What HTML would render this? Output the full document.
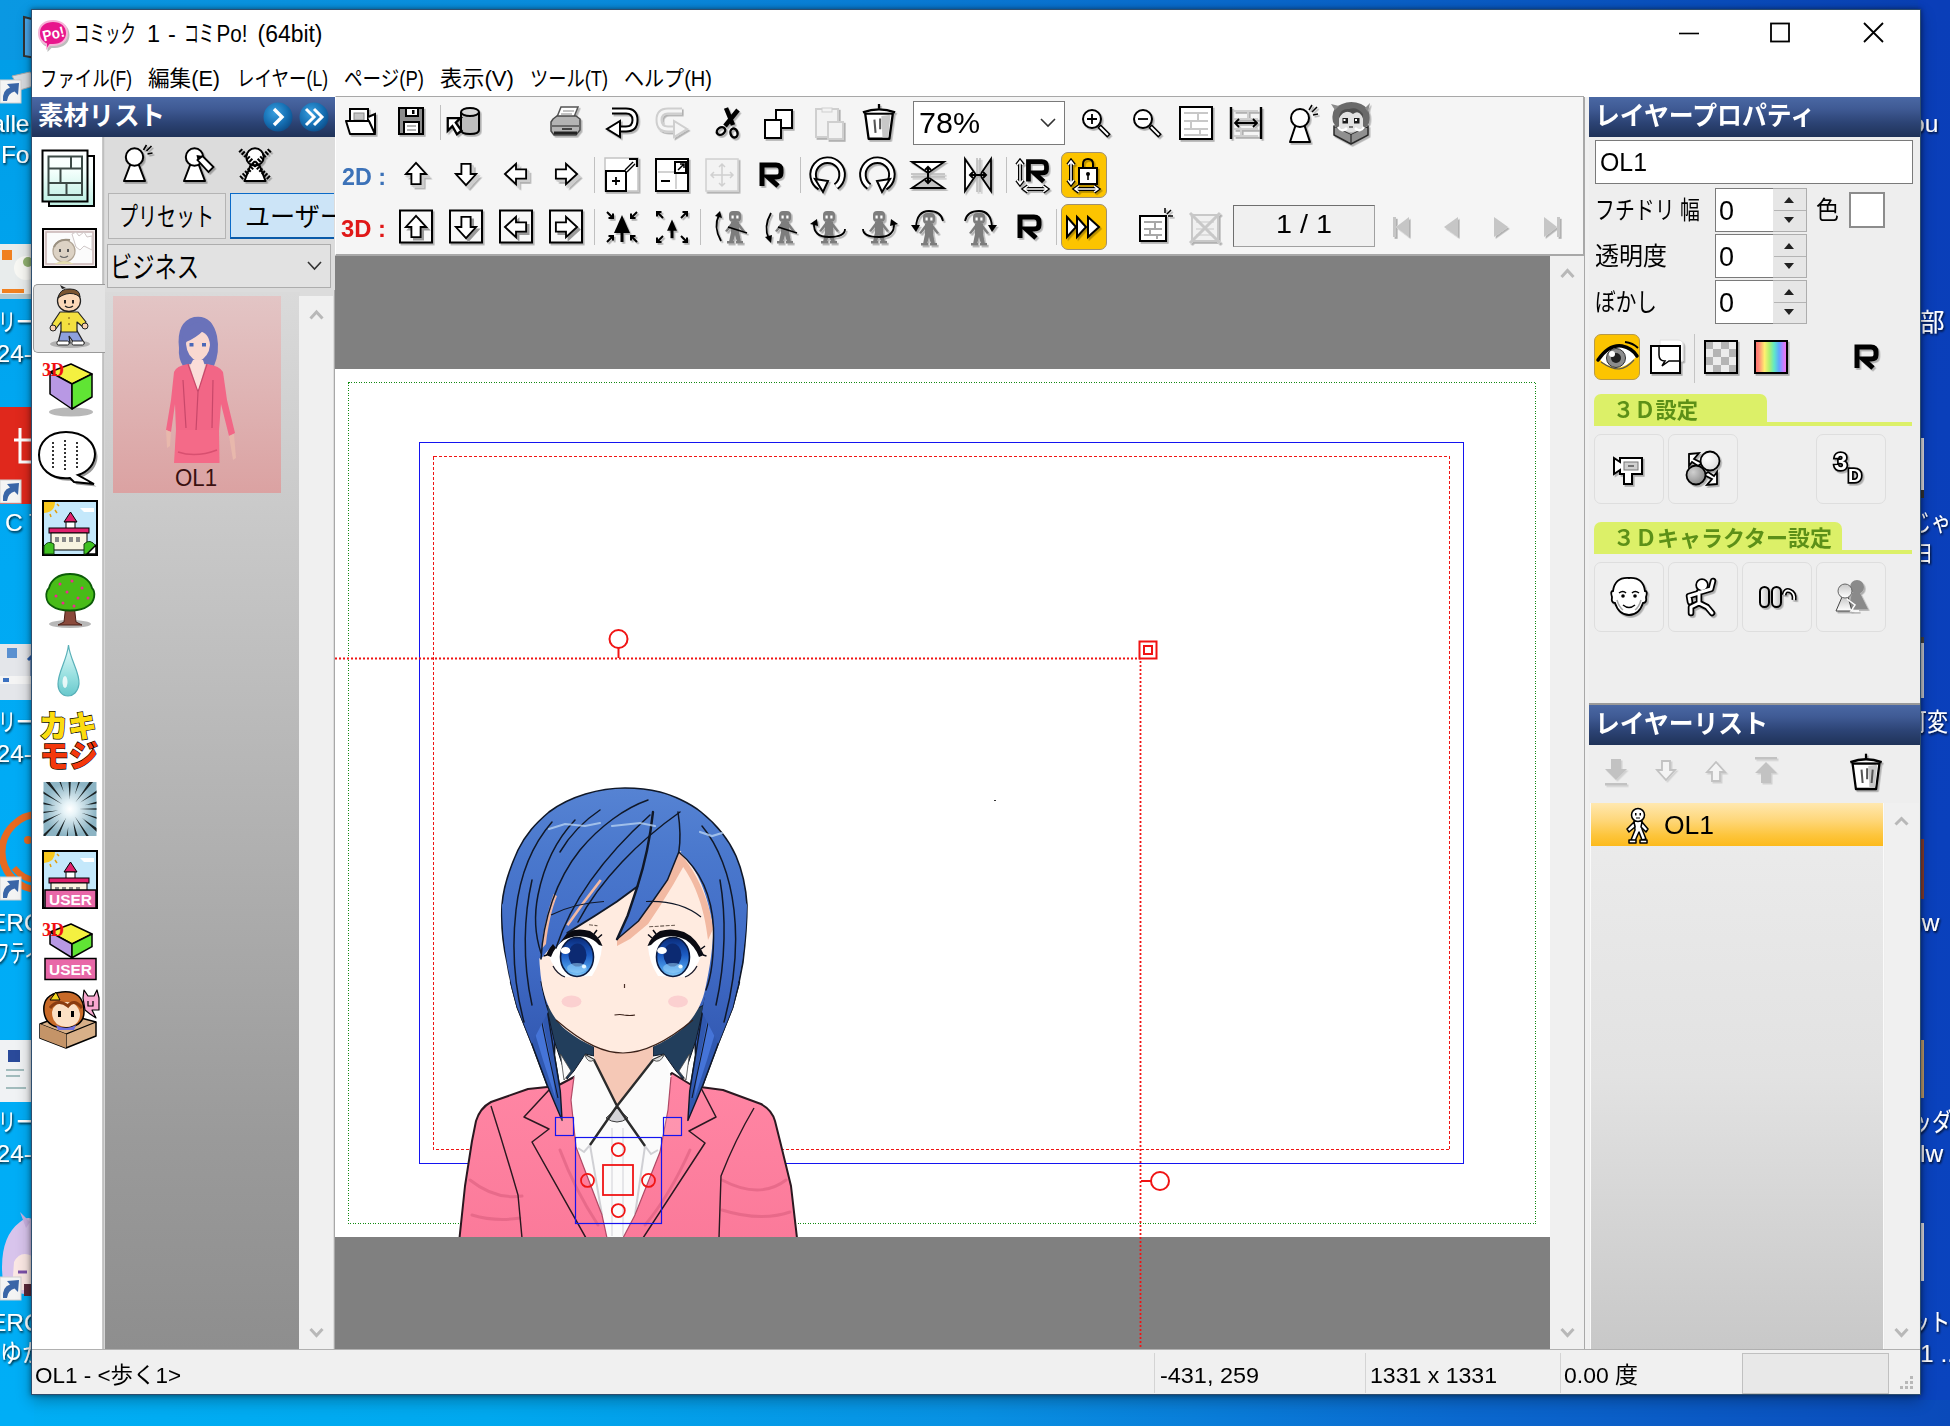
<!DOCTYPE html>
<html lang="ja">
<head>
<meta charset="utf-8">
<title>コミック 1 - コミPo! (64bit)</title>
<style>
html,body{margin:0;padding:0}
body{width:1950px;height:1426px;position:relative;overflow:hidden;background:#0a78d2;
 font-family:"Liberation Sans","Noto Sans CJK JP",sans-serif;color:#000}
div{position:absolute;box-sizing:border-box}
svg.ov{position:absolute;left:0;top:0;width:1950px;height:1426px;overflow:hidden;pointer-events:none}
svg text{font-family:"Liberation Sans","Noto Sans CJK JP",sans-serif}
.hdr{background:linear-gradient(#4a68a4 0%,#3f5a94 30%,#2c4374 65%,#1f3258 100%)}
</style>
</head>
<body>

<!-- 10_desktop.html -->
<div id="desktop" style="left:0;top:0;width:1950px;height:1426px;background:
 linear-gradient(to right,#0a98e2 0%,#0a8cdc 30%,#0a72d0 55%,#0a56c0 80%,#0a3eb2 100%)"></div>
<div style="left:0;top:700px;width:1950px;height:726px;background:
 linear-gradient(to right,#00aef4 0%,#00a8ee 25%,#0890e2 50%,#0a68ce 75%,#0a4aba 100%)"></div>
<div style="left:0;top:60px;width:34px;height:1366px;background:linear-gradient(#009ee8,#00a8f2 30%,#00acf6 60%,#00aef6)"></div>
<div style="left:1918px;top:0;width:32px;height:1400px;background:linear-gradient(#0a3eb8,#0a40bc 60%,#0a44be)"></div>

<!-- 15_desktop_icons.html -->
<svg class="ov" id="deskicons">
 <defs>
  <filter id="tsh" x="-20%" y="-20%" width="150%" height="150%"><feDropShadow dx="1" dy="1.500" stdDeviation="1.200" flood-color="#000" flood-opacity=".85"/></filter>
   </defs>
 <!-- left column -->
 <path d="M24 17L36 20V58L24 56Z" fill="#4aa8ec" stroke="#333" stroke-width="2"/>
 <path d="M12 76L30 72L40 84L20 90Z" fill="#d8dce0" stroke="#aaa"/>
 <g transform="translate(0 80)"><rect x="0" y="0" width="21" height="23" fill="#f4f4f4" stroke="#d0d0d0" stroke-width="1"/><path d="M3 21Q2 10 10 7.500L7 4L19 3L18 15L14.500 11.500Q8 13 7 21Z" fill="#3a66a8"/></g>
 <rect x="0" y="244" width="33" height="55" fill="#e8ecec"/><rect x="2" y="250" width="10" height="10" fill="#f08020"/><circle cx="26" cy="268" r="12" fill="#f8f8f4"/><circle cx="28" cy="262" r="5" fill="#90b070"/><rect x="2" y="289" width="22" height="4" fill="#f08020"/><rect x="0" y="294" width="33" height="5" fill="#b0c8d0"/>
 <rect x="0" y="407" width="33" height="97" fill="#e0281c"/>
 <path d="M14 440H32M20 428V462H32" fill="none" stroke="#fff" stroke-width="3"/>
 <g transform="translate(0 480)"><rect x="0" y="0" width="21" height="23" fill="#f4f4f4" stroke="#d0d0d0" stroke-width="1"/><path d="M3 21Q2 10 10 7.500L7 4L19 3L18 15L14.500 11.500Q8 13 7 21Z" fill="#3a66a8"/></g>
 <rect x="0" y="644" width="33" height="56" fill="#e4e6ea"/><rect x="7" y="648" width="10" height="10" fill="#5a90d0"/><rect x="0" y="676" width="33" height="8" fill="#f4f4f4"/><rect x="3" y="678" width="6" height="4" fill="#3a70c0"/><path d="M28 660L32 656V676" stroke="#2a60b0" stroke-width="3" fill="none"/>
 <circle cx="40" cy="852" r="38" fill="none" stroke="#e86a20" stroke-width="7"/><path d="M14 868Q24 880 36 880" fill="none" stroke="#e86a20" stroke-width="6"/><circle cx="28" cy="840" r="4" fill="#e86a20"/>
 <g transform="translate(0 877)"><rect x="0" y="0" width="21" height="23" fill="#f4f4f4" stroke="#d0d0d0" stroke-width="1"/><path d="M3 21Q2 10 10 7.500L7 4L19 3L18 15L14.500 11.500Q8 13 7 21Z" fill="#3a66a8"/></g>
 <rect x="0" y="1040" width="33" height="62" fill="#f0f2f4"/><rect x="8" y="1050" width="12" height="12" fill="#2a4a9a"/><path d="M6 1070H24M6 1076H20M6 1088H26" stroke="#8aa" stroke-width="1.500"/>
 <path d="M4 1290Q-4 1240 20 1222Q30 1214 34 1222V1296Z" fill="#d8c4ec"/><path d="M20 1212L30 1222L26 1228Z" fill="#c8b0e0"/><path d="M14 1262Q20 1250 32 1256V1290H12Z" fill="#fbe8e4"/><path d="M18 1272H27" stroke="#7a50a8" stroke-width="3"/><rect x="24" y="1284" width="10" height="12" fill="#5a2a3a"/>
 <g transform="translate(0 1277)"><rect x="0" y="0" width="21" height="23" fill="#f4f4f4" stroke="#d0d0d0" stroke-width="1"/><path d="M3 21Q2 10 10 7.500L7 4L19 3L18 15L14.500 11.500Q8 13 7 21Z" fill="#3a66a8"/></g>
 <!-- right column icon scraps -->
 <rect x="1920" y="438" width="4" height="52" fill="#e4e4e8"/><rect x="1920" y="490" width="4" height="8" fill="#333"/>
 <rect x="1920" y="637" width="4" height="6" fill="#444"/><rect x="1920" y="643" width="4" height="55" fill="#c8ccd4"/>
 <rect x="1920" y="839" width="4" height="60" fill="#8a4030"/><rect x="1920" y="1040" width="4" height="58" fill="#c0a070"/>
 <rect x="1920" y="1223" width="4" height="58" fill="#e4e4e8"/>
 <g fill="#fff" font-size="24.500" filter="url(#tsh)">
  <g text-anchor="end">
   <text x="29.500" y="132">alle</text><text x="29.500" y="163">Fo</text>
   <text x="34" y="331" textLength="36" lengthAdjust="spacingAndGlyphs">リー</text><text x="32" y="362">24-</text>
   <text x="44" y="531">C T</text>
   <text x="34" y="731" textLength="36" lengthAdjust="spacingAndGlyphs">リー</text><text x="32" y="762">24-</text>
   <text x="43" y="931">ERO</text><text x="40" y="962" textLength="46" lengthAdjust="spacingAndGlyphs">フティ</text>
   <text x="34" y="1131" textLength="36" lengthAdjust="spacingAndGlyphs">リー</text><text x="32" y="1162">24-</text>
   <text x="43" y="1331">ERO</text><text x="44" y="1362" textLength="44" lengthAdjust="spacingAndGlyphs">ゆか</text>
  </g>
  <text x="1911" y="132">ou</text>
  <text x="1920" y="331">部</text>
  <text x="1911" y="531" textLength="40" lengthAdjust="spacingAndGlyphs">じゃ</text><text x="1915" y="562" textLength="18" lengthAdjust="spacingAndGlyphs">ヨ</text>
  <text x="1906" y="731" textLength="42" lengthAdjust="spacingAndGlyphs">可変</text>
  <text x="1908" y="931">3w</text>
  <text x="1912" y="1131" textLength="40" lengthAdjust="spacingAndGlyphs">ッダ</text><text x="1920" y="1162">lw</text>
  <text x="1910" y="1331" textLength="40" lengthAdjust="spacingAndGlyphs">ット</text><text x="1920" y="1362">1 ...</text>
 </g>
</svg>

<!-- 20_window.html -->
<div id="win" style="left:31px;top:9px;width:1890px;height:1386px;background:#f0f0f0;border:1px solid #2d4d6e;box-shadow:0 0 5px rgba(0,0,0,.45),0 6px 14px rgba(0,0,0,.28)"></div>
<div id="titlebar" style="left:32px;top:10px;width:1888px;height:48px;background:#fff"></div>
<div id="menubar" style="left:32px;top:58px;width:1888px;height:39px;background:#fff"></div>
<svg class="ov">
 <!-- app icon -->
 <g>
  <path d="M38 33 C38 24 45 20 53 20 C62 20 68 25 68 33 C68 41 62 46 53 46 L50 46 L46 50 L46 45 C41 43 38 39 38 33Z" fill="#bdbdbd" transform="translate(1.5 2)"/>
  <path d="M38 33 C38 24 45 20 53 20 C62 20 68 25 68 33 C68 41 62 46 53 46 L50 46 L46 50 L46 45 C41 43 38 39 38 33Z" fill="#f6b4d8"/>
  <path d="M40 33 C40 25.500 46 22 53 22 C61 22 66 26.500 66 33 C66 39.500 61 44 53 44 L49.500 44 L47 47.500 L47 43.500 C42.500 41.500 40 38 40 33Z" fill="#e8168c"/>
  <text x="42.500" y="39" font-size="15" font-weight="700" fill="#fff" textLength="22" lengthAdjust="spacingAndGlyphs" transform="rotate(-14 53 34)">Po!</text>
 </g>
 <g font-size="23.5"><text x="74" y="41.5" textLength="62" lengthAdjust="spacingAndGlyphs">コミック</text><text x="147" y="41.5">1</text><text x="168" y="41.5">-</text><text x="184" y="41.5" textLength="30" lengthAdjust="spacingAndGlyphs">コミ</text><text x="216.5" y="41.5" textLength="31" lengthAdjust="spacingAndGlyphs">Po!</text><text x="257.5" y="41.5" textLength="65" lengthAdjust="spacingAndGlyphs">(64bit)</text></g>
 <!-- window buttons -->
 <path d="M1679 33.5H1699" stroke="#000" stroke-width="1.6"/>
 <rect x="1771" y="23.5" width="18" height="18" fill="none" stroke="#000" stroke-width="1.8"/>
 <path d="M1864 23L1883 42M1883 23L1864 42" stroke="#000" stroke-width="1.8"/>
 <!-- menu -->
 <g font-size="21.5">
 <text x="40" y="86" textLength="92" lengthAdjust="spacingAndGlyphs">ファイル(F)</text>
 <text x="148" y="86" textLength="72" lengthAdjust="spacingAndGlyphs">編集(E)</text>
 <text x="237" y="86" textLength="91" lengthAdjust="spacingAndGlyphs">レイヤー(L)</text>
 <text x="344" y="86" textLength="80" lengthAdjust="spacingAndGlyphs">ページ(P)</text>
 <text x="440" y="86" textLength="74" lengthAdjust="spacingAndGlyphs">表示(V)</text>
 <text x="530" y="86" textLength="78" lengthAdjust="spacingAndGlyphs">ツール(T)</text>
 <text x="624" y="86" textLength="88" lengthAdjust="spacingAndGlyphs">ヘルプ(H)</text>
 </g>
</svg>

<!-- 30_left.html -->
<div id="leftpanel" style="left:32px;top:97px;width:303px;height:1253px;background:#dcdcdc"></div>
<div class="hdr" style="left:32px;top:97px;width:303px;height:40px"></div>
<div id="iconcol" style="left:32px;top:137px;width:71px;height:1213px;background:#fff;border-right:1px solid #c8c8c8"></div>
<div style="left:103px;top:137px;width:2px;height:1213px;background:linear-gradient(to right,#b4b4b4,#e0e0e0)"></div>
<div style="left:334px;top:290px;width:1px;height:1060px;background:#a8a8a8"></div>
<div id="seltab" style="left:33px;top:284px;width:72px;height:69px;background:#e4e4e4;border:1px solid #9a9a9a;border-right:none;border-radius:5px 0 0 5px"></div>
<div id="tab1" style="left:108px;top:193px;width:118px;height:46px;background:#e1e1e1;border:1px solid #b4b4b4"></div>
<div id="tab2" style="left:230px;top:193px;width:104px;height:46px;background:#cce4f7;border:1px solid #0a6ac8;border-bottom:2px solid #0a5aa8;border-right:none"></div>
<div id="combo" style="left:107px;top:244px;width:224px;height:44px;background:#e2e2e2;border:1px solid #adadad"></div>
<div id="matlist" style="left:105px;top:292px;width:195px;height:1058px;background:linear-gradient(#dadada 0%,#c6c6c6 25%,#aeaeae 55%,#9a9a9a 80%,#8e8e8e 100%)"></div>
<div id="lscroll" style="left:299px;top:296px;width:34px;height:1054px;background:#f0f0f0"></div>
<div id="thumb" style="left:113px;top:296px;width:168px;height:197px;background:linear-gradient(#e3c5c5,#dba2a2)"></div>
<svg class="ov">
 <defs>
  <radialGradient id="bluebtn" cx="0.4" cy="0.35" r="0.7"><stop offset="0" stop-color="#3aa0e0"/><stop offset="0.6" stop-color="#1670b4"/><stop offset="1" stop-color="#0c4c88"/></radialGradient>
 </defs>
 <text x="38" y="125" font-size="26" font-weight="700" fill="#fff" textLength="127" lengthAdjust="spacingAndGlyphs">素材リスト</text>
 <circle cx="278" cy="117" r="14.5" fill="url(#bluebtn)"/>
 <circle cx="314" cy="117" r="14.5" fill="url(#bluebtn)"/>
 <path d="M274 109L282 117L274 125" fill="none" stroke="#fff" stroke-width="3.4"/>
 <path d="M306 109L314 117L306 125M314 109L322 117L314 125" fill="none" stroke="#fff" stroke-width="3"/>
 <text x="119" y="226" font-size="26" textLength="95" lengthAdjust="spacingAndGlyphs">プリセット</text>
 <text x="245" y="226" font-size="26" textLength="100" lengthAdjust="spacingAndGlyphs">ユーザー</text>
 <text x="110" y="278" font-size="29" textLength="89" lengthAdjust="spacingAndGlyphs">ビジネス</text>
 <path d="M308 262L314.5 269L321 262" fill="none" stroke="#333" stroke-width="1.6"/>
 <path d="M310.500 318.500L316.500 312L322.500 318.500" fill="none" stroke="#b8b8b8" stroke-width="3"/>
 <path d="M310.500 1329L316.500 1335.500L322.500 1329" fill="none" stroke="#b8b8b8" stroke-width="3"/>
 <text x="175" y="486" font-size="23" fill="#3a1010" textLength="42" lengthAdjust="spacingAndGlyphs">OL1</text>
</svg>

<!-- 35_left_icons.html -->
<svg class="ov" id="lefticons">
<defs><filter id="lsh" x="-30%" y="-30%" width="170%" height="170%"><feDropShadow dx="1.6" dy="1.800" stdDeviation="0.7" flood-color="#000" flood-opacity=".28"/></filter><linearGradient id="mint" x1="0" y1="0" x2="0" y2="1"><stop offset="0" stop-color="#fff"/><stop offset=".4" stop-color="#f4fffc"/><stop offset="1" stop-color="#bff0e4"/></linearGradient><linearGradient id="dropg" x1="0" y1="0" x2="0" y2="1"><stop offset="0" stop-color="#e8fcfc"/><stop offset=".6" stop-color="#98e0e0"/><stop offset="1" stop-color="#68c8cc"/></linearGradient><radialGradient id="burstg"><stop offset="0" stop-color="#fff"/><stop offset=".25" stop-color="#e8f4f8"/><stop offset="1" stop-color="#8cb4c4"/></radialGradient><clipPath id="burstclip"><rect x="43.500" y="782" width="53" height="54"/></clipPath></defs>
<g transform="translate(134.5 165)" filter="url(#lsh)"><path d="M-4 -1L-10.500 16H10.500L4 -1" fill="#fff" stroke="#000" stroke-width="2" stroke-linejoin="round"/><circle cx="0" cy="-8" r="8.700" fill="#fff" stroke="#000" stroke-width="2"/><path d="M9 -15L12 -20M13 -11L18 -12M12 -14L17 -19" stroke="#000" stroke-width="1.600"/></g>
<g transform="translate(194.5 165)" filter="url(#lsh)"><path d="M-4 -1L-10.500 16H10.500L4 -1" fill="#fff" stroke="#000" stroke-width="2" stroke-linejoin="round"/><circle cx="0" cy="-8" r="8.700" fill="#fff" stroke="#000" stroke-width="2"/><path d="M3 -5L8 -9L19 2L14 7Z" fill="#fff" stroke="#000" stroke-width="1.800"/><path d="M3 -5L2 -10L8 -9" fill="#000"/></g>
<g transform="translate(255 165)" filter="url(#lsh)"><path d="M-4 -1L-10.500 16H10.500L4 -1" fill="#fff" stroke="#000" stroke-width="2" stroke-linejoin="round"/><circle cx="0" cy="-8" r="8.700" fill="#fff" stroke="#000" stroke-width="2"/><path d="M-15 -15L15 14M15 -15L-15 14" stroke="#000" stroke-width="4.500" stroke-dasharray="2 1.500"/></g>
<g><rect x="49" y="156" width="45" height="50" fill="url(#mint)" stroke="#000" stroke-width="2"/><rect x="42.500" y="150.500" width="45" height="51" fill="url(#mint)" stroke="#000" stroke-width="2"/><path d="M48.500 156.500H82V195H48.500ZM48.500 168.500H82M48.500 183H82M71 156.500V168.500M60.500 168.500V183M66.500 183V195" fill="none" stroke="#3c4a46" stroke-width="2"/></g>
<g><rect x="43" y="229" width="53" height="38" fill="#f4ecec" stroke="#000" stroke-width="2"/><rect x="46" y="232" width="47" height="32" fill="#fbfbfb" stroke="#c8b4b4" stroke-width="1.500"/><path d="M72 234L76 232L79 236L84 232L87 237L92 236V250L84 246L80 250L76 247Z" fill="#fff" stroke="#d0c8c8" stroke-width="1"/><circle cx="64" cy="251" r="11" fill="#dcd2c4" stroke="#b0a494" stroke-width="1.200"/><path d="M54 247Q58 238 70 240" fill="none" stroke="#9a9080" stroke-width="2"/><rect x="59" y="249" width="2" height="3" fill="#555"/><rect x="67" y="249" width="2" height="3" fill="#555"/><path d="M60 256Q64 259 68 256" fill="none" stroke="#666" stroke-width="1.200"/><path d="M54 264Q64 258 74 264Z" fill="#e4dcb0"/></g>
<g><ellipse cx="70" cy="344" rx="20" ry="4" fill="#9a9a9a" opacity=".7"/><path d="M61 331L58 343H70L69 336L74 343H84L76 329Z" fill="#8ea0dc" stroke="#222" stroke-width="1.200"/><rect x="57" y="341" width="12" height="4" rx="1.500" fill="#fff" stroke="#222"/><rect x="72" y="341" width="12" height="4" rx="1.500" fill="#fff" stroke="#222"/><path d="M60 312L52 324L55 330L61 322V332H77V322L83 327L86 322L78 312Z" fill="#f4e040" stroke="#222" stroke-width="1.200" stroke-linejoin="round"/><circle cx="53" cy="328" r="3" fill="#f8d0b0" stroke="#222"/><circle cx="85" cy="326" r="3" fill="#f8d0b0" stroke="#222"/><ellipse cx="69" cy="301" rx="11.500" ry="10.500" fill="#fbd8b8" stroke="#222" stroke-width="1.300"/><path d="M58 298Q60 288 70 289Q80 289 80 297Q74 292 66 294Q62 295 58 298Z" fill="#7a5430" stroke="#222" stroke-width="1"/><path d="M62 289L60 285L66 288" fill="#222"/><rect x="64" y="300" width="2" height="3.500" fill="#222"/><rect x="72" y="300" width="2" height="3.500" fill="#222"/><path d="M65 306Q69 309 73 306" fill="none" stroke="#222" stroke-width="1.200"/><circle cx="69" cy="318" r="1" fill="#a08020"/><circle cx="69" cy="324" r="1" fill="#a08020"/></g>
<ellipse cx="71" cy="412" rx="22" ry="4.500" fill="#9a9a9a" opacity=".7"/><g transform="translate(50 364)"><path d="M0 8L21 0L42 10L22 20Z" fill="#f4f040" stroke="#000" stroke-width="1.500" stroke-linejoin="round"/><path d="M0 8L22 20V45.0L0 30.0Z" fill="#b898e4" stroke="#000" stroke-width="1.500" stroke-linejoin="round"/><path d="M42 10L22 20V45.0L42 33.0Z" fill="#60e434" stroke="#000" stroke-width="1.500" stroke-linejoin="round"/></g><text x="42" y="376" font-size="19" font-weight="700" fill="#f01010" textLength="22" lengthAdjust="spacingAndGlyphs" style="font-family:'Liberation Serif',serif">3D</text>
<g><path d="M66 432C84 432 95 443 95 454C95 464 88 472 78 475L94 484L74 482L70 478C50 480 39 468 39 455C39 443 48 432 66 432Z" fill="#999" transform="translate(2.500 2.500)"/><path d="M66 432C84 432 95 443 95 454C95 464 88 472 78 475L94 484L74 482L70 478C50 480 39 468 39 455C39 443 48 432 66 432Z" fill="#fff" stroke="#000" stroke-width="2"/><path d="M53 442V468M65 440V470M77 442V468" stroke="#333" stroke-width="2" stroke-dasharray="2 2"/></g>
<g transform="translate(0 500)"><rect x="43" y="1" width="54" height="54" fill="#c4e8fb" stroke="#000" stroke-width="2"/><path d="M44 2H55Q55 12 44 13Z" fill="#f8c820"/><path d="M57 4L59 6M55 10L57 13M50 14L51 17" stroke="#e0a010" stroke-width="1.500"/><path d="M80 8H94V12H84Z" fill="#fff"/><path d="M64 22L70.500 12L77 22Z" fill="#e0206c" stroke="#000" stroke-width="1"/><rect x="66" y="22" width="9" height="7" fill="#fff" stroke="#000" stroke-width="1"/><rect x="49" y="28" width="40" height="5" fill="#e0206c" stroke="#000" stroke-width="1"/><rect x="51" y="33" width="36" height="17" fill="#f8f4e0" stroke="#000" stroke-width="1"/><path d="M55 37h4v5h-4zM62 37h4v5h-4zM69 37h4v5h-4zM76 37h4v5h-4z" fill="#888"/><path d="M44 46Q48 40 54 44V54H44ZM96 46Q90 38 84 44V54H96Z" fill="#40c020" stroke="#104010" stroke-width="1"/><path d="M87 54L96 45V54Z" fill="#fff" stroke="#000" stroke-width="1.500"/></g>
<g><ellipse cx="70" cy="624" rx="21" ry="4" fill="#9a9a9a" opacity=".7"/><path d="M66 604H74L76 622L82 625H58L64 622Z" fill="#8a4a3c" stroke="#4a2018" stroke-width="1"/><path d="M70 574C82 574 90 580 92 588C96 592 95 602 88 606C80 612 60 612 52 606C45 602 45 592 49 588C51 580 58 574 70 574Z" fill="#48bc18" stroke="#0c5c08" stroke-width="1.800"/><g fill="#f02890"><circle cx="60" cy="584" r="1.500"/><circle cx="72" cy="581" r="1.500"/><circle cx="82" cy="588" r="1.500"/><circle cx="56" cy="596" r="1.500"/><circle cx="67" cy="592" r="1.500"/><circle cx="78" cy="598" r="1.500"/><circle cx="88" cy="598" r="1.500"/><circle cx="63" cy="603" r="1.500"/><circle cx="74" cy="606" r="1.500"/></g></g>
<path d="M68.500 645C70 660 80 672 79 684C78 692 73 696 68 696C62 696 58 691 58 684C58 672 67 660 68.500 645Z" fill="url(#dropg)" stroke="#58b0b8" stroke-width="1.200"/><ellipse cx="65" cy="682" rx="2.500" ry="6" fill="#fff" opacity=".8"/>
<g font-weight="900" stroke="#000" stroke-width="1.300" paint-order="stroke" style="font-family:'Noto Sans CJK JP',sans-serif"><text x="39" y="737" font-size="31" fill="#fcdc10" textLength="58" lengthAdjust="spacingAndGlyphs">カキ</text><text x="40" y="767" font-size="31" fill="#f4380c" textLength="58" lengthAdjust="spacingAndGlyphs">モジ</text></g>
<g><rect x="43.500" y="782" width="53" height="54" fill="url(#burstg)"/><g clip-path="url(#burstclip)"><path d="M79.0 809.0L110.0 807.6L110.0 810.4ZM81.4 812.8L108.3 820.4L107.4 823.1ZM82.0 818.1L102.7 832.0L101.0 834.3ZM84.1 820.2L102.1 832.8L100.4 835.0ZM74.9 816.6L92.9 841.8L90.5 843.3ZM73.0 820.6L81.2 847.4L78.5 848.1ZM73.3 823.6L80.3 847.7L77.5 848.3ZM68.2 826.9L67.4 848.9L64.6 848.6ZM66.3 817.2L54.8 846.0L52.3 844.9ZM64.8 819.8L53.9 845.6L51.4 844.4ZM59.5 819.7L43.1 838.6L41.1 836.6ZM54.0 817.2L35.1 828.5L33.8 826.0ZM61.9 812.9L34.6 827.6L33.4 825.1ZM58.1 810.5L30.5 815.3L30.2 812.6ZM55.3 806.0L30.5 802.4L31.1 799.7ZM52.5 805.0L30.7 801.5L31.3 798.7ZM62.3 804.3L35.2 789.3L36.6 787.0ZM62.3 799.8L43.2 779.3L45.4 777.5ZM60.6 797.3L44.0 778.6L46.2 776.9ZM63.8 792.1L55.0 771.9L57.7 771.0ZM69.8 800.0L67.6 769.1L70.4 769.0ZM70.0 797.0L68.6 769.0L71.4 769.0ZM74.8 794.8L81.4 770.7L84.1 771.6ZM80.9 794.7L93.0 776.3L95.3 778.0ZM75.6 802.0L93.8 776.9L96.0 778.6ZM80.1 802.5L102.8 786.1L104.3 788.5ZM84.5 805.3L108.4 797.8L109.1 800.5ZM87.5 805.0L108.7 798.7L109.3 801.5Z" fill="#1a2224"/></g></g>
<g transform="translate(0 850)"><rect x="43" y="1" width="54" height="57" fill="#c4e8fb" stroke="#000" stroke-width="2"/><path d="M44 2H55Q55 12 44 13Z" fill="#f8c820"/><path d="M57 4L59 6M55 10L57 13M50 14L51 17" stroke="#e0a010" stroke-width="1.500"/><path d="M80 8H94V12H84Z" fill="#fff"/><path d="M64 22L70.500 12L77 22Z" fill="#e0206c" stroke="#000" stroke-width="1"/><rect x="66" y="22" width="9" height="7" fill="#fff" stroke="#000" stroke-width="1"/><rect x="49" y="28" width="40" height="5" fill="#e0206c" stroke="#000" stroke-width="1"/><rect x="51" y="33" width="36" height="17" fill="#f8f4e0" stroke="#000" stroke-width="1"/><path d="M55 37h4v5h-4zM62 37h4v5h-4zM69 37h4v5h-4zM76 37h4v5h-4z" fill="#888"/><rect x="45" y="40" width="51" height="18" fill="#e868a8" stroke="#000" stroke-width="1.500"/><text x="49" y="54.500" font-size="14" font-weight="700" fill="#fff" textLength="43" lengthAdjust="spacingAndGlyphs">USER</text></g>
<g transform="translate(50 924)"><path d="M0 8L21 0L42 10L22 20Z" fill="#f4f040" stroke="#000" stroke-width="1.500" stroke-linejoin="round"/><path d="M0 8L22 20V33.75L0 20.1Z" fill="#b898e4" stroke="#000" stroke-width="1.500" stroke-linejoin="round"/><path d="M42 10L22 20V33.75L42 22.65Z" fill="#60e434" stroke="#000" stroke-width="1.500" stroke-linejoin="round"/></g><text x="42" y="936" font-size="19" font-weight="700" fill="#f01010" textLength="22" lengthAdjust="spacingAndGlyphs" style="font-family:'Liberation Serif',serif">3D</text><rect x="45" y="958.500" width="51" height="21" fill="#e868a8" stroke="#000" stroke-width="1.500"/><text x="49" y="975" font-size="14" font-weight="700" fill="#fff" textLength="43" lengthAdjust="spacingAndGlyphs">USER</text>
<g><path d="M40 1024L66 1014L96 1022V1036L66 1048L40 1038Z" fill="#d8b088" stroke="#000" stroke-width="1.500" stroke-linejoin="round"/><path d="M40 1024L66 1034L96 1022M66 1034V1048" fill="none" stroke="#000" stroke-width="1.200"/><path d="M40 1024L66 1034V1048L40 1038Z" fill="#c49468"/><path d="M44 1012Q42 994 62 992Q84 990 84 1012Q84 1026 66 1028Q46 1028 44 1012Z" fill="#c86a28" stroke="#000" stroke-width="1.500"/><path d="M52 1012Q54 1002 66 1002Q78 1002 80 1014Q80 1026 66 1027Q52 1026 52 1012Z" fill="#fce0c4"/><path d="M50 1000L56 992L60 1000Z" fill="#f4d820" stroke="#000" stroke-width="1"/><path d="M50 1008Q58 998 68 1006Q74 998 82 1008" fill="none" stroke="#8a3c10" stroke-width="3"/><rect x="58" y="1011" width="3" height="6" fill="#000"/><rect x="71" y="1011" width="3" height="6" fill="#000"/><path d="M56 1025Q66 1031 76 1025L74 1030H58Z" fill="#7070e0"/><path d="M83 998L84 990L88 996L94 996L97 990L99 998V1010H92L96 1018L90 1014L85 1010Z" fill="#f8a8d0" stroke="#000" stroke-width="1.200" stroke-linejoin="round"/><path d="M88 1001V1006H93V1001" fill="none" stroke="#000" stroke-width="1.200"/></g>
<g id="thumbchar"><path d="M179 348Q176 322 194 317Q212 314 217 336Q220 352 214 366L206 364L190 364L183 366Q178 358 179 348Z" fill="#6a72ba"/><path d="M186 344Q187 332 198 331Q209 332 210 345Q209 357 198 362Q187 357 186 344Z" fill="#f9d8d0"/><path d="M181 350Q181 326 198 322Q214 326 214 348Q210 336 204 330Q196 338 186 342Q184 346 181 350Z" fill="#6a72ba"/><rect x="189.500" y="343" width="4" height="3.500" fill="#4a68b8"/><rect x="202" y="343" width="4" height="3.500" fill="#4a68b8"/><path d="M193 360H203L205 366L198 392L190 366Z" fill="#fbdcd8"/><path d="M174 372Q176 366 188 364L198 392L207 364Q220 366 223 372L227 400L235 433L229 436L221 404L219 431H176L175 404L171 432L166 430L171 400Z" fill="#f26686"/><path d="M188 364L198 392L207 364M198 392L196 431M183 380L186 428M213 380L212 428" fill="none" stroke="#c8486a" stroke-width="1.200"/><path d="M176 430H219L219.500 463H174Z" fill="#f46a88"/><path d="M178 452Q196 458 217 450" fill="none" stroke="#d85070" stroke-width="1.500"/><path d="M166 430L171 432L170 446L167 448ZM229 436L234 434L236 458L233 460Z" fill="#e8b8ac"/></g>
</svg>

<!-- 40_toolbar.html -->
<div id="toolbar" style="left:335px;top:96px;width:1249px;height:160px;background:#f5f5f5;border-top:1px solid #a8a8a8;border-left:1px solid #fff;border-right:1px solid #a8a8a8;border-bottom:2px solid #a8a8a8"></div>
<div id="zoomcombo" style="left:913px;top:101px;width:152px;height:44px;background:#fff;border:1px solid #7a7a7a"></div>
<div id="pagebox" style="left:1233px;top:205px;width:142px;height:42px;background:#f0f0f0;border:1px solid #a0a0a0;border-top-color:#6e6e6e;border-left-color:#6e6e6e"></div>
<div id="hl1" style="left:1061px;top:152px;width:46px;height:46px;background:#fcc400;border:1px solid #a09070;border-radius:7px"></div>
<div id="hl2" style="left:1061px;top:204px;width:46px;height:46px;background:#fcc400;border:1px solid #a09070;border-radius:7px"></div>

<!-- 45_toolbar_icons.html -->
<svg class="ov" id="tbicons">
<defs><filter id="ish" x="-30%" y="-30%" width="170%" height="170%"><feDropShadow dx="1.6" dy="1.800" stdDeviation="0.7" flood-color="#000" flood-opacity=".28"/></filter></defs>
<g filter="url(#ish)">
<g transform="translate(361 122)" ><path d="M-11 -13H7V2H-11Z" fill="#fff" stroke="#000" stroke-width="2"/><rect x="-7" y="-9" width="10" height="7" fill="#c4c4c4" stroke="#8a8a8a"/><path d="M7 -5L14 -8V11" fill="#fff" stroke="#000" stroke-width="2"/><path d="M-15 -1H8L14 12H-11Z" fill="#fff" stroke="#000" stroke-width="2" stroke-linejoin="round"/></g>
<g transform="translate(411 122)" ><rect x="-12" y="-14" width="24" height="26" fill="#8c8c8c" stroke="#000" stroke-width="2"/><rect x="-5" y="-14" width="12" height="8" fill="#fff" stroke="#000" stroke-width="2"/><rect x="1" y="-12" width="2.500" height="4" fill="#000"/><rect x="-7" y="0" width="15" height="12" fill="#fff" stroke="#000" stroke-width="2"/><path d="M-4 4H5M-4 8H5" stroke="#999" stroke-width="1.500"/></g>
<g transform="translate(466 122)" ><path d="M-5 -10V8Q-5 12 4 12Q13 12 13 8V-10" fill="#bdbdbd" stroke="#000" stroke-width="2"/><ellipse cx="4" cy="-10" rx="9" ry="4" fill="#d8d8d8" stroke="#000" stroke-width="2"/><path d="M-15 -6H-4L-8 -2L-3 5L-7 8L-11 1L-15 5Z" fill="#fff" stroke="#000" stroke-width="2" stroke-linejoin="miter" transform="translate(-1 3) scale(1.15)"/></g>
<g transform="translate(566 122)" ><path d="M-5 -15H12L8 -5H-9Z" fill="#fff" stroke="#555" stroke-width="1.500"/><path d="M-3 -11H8M-5 -8H6" stroke="#888"/><path d="M-13 -3L-9 -6H10L14 -3V8L10 13H-12L-15 9V0Z" fill="#b4b4b4" stroke="#4a4a4a" stroke-width="1.500"/><path d="M-15 4H14" stroke="#6a6a6a" stroke-width="2"/><path d="M-12 11H11" stroke="#222" stroke-width="3"/><rect x="-4" y="6" width="10" height="2" fill="#444"/></g>
<g transform="translate(622 123)" ><path d="M-10 -12H4Q13 -12 13 -3Q13 6 4 6H-2" fill="none" stroke="#000" stroke-width="7"/><path d="M-10 -12H4Q13 -12 13 -3Q13 6 4 6H-2" fill="none" stroke="#fff" stroke-width="3"/><path d="M-2 -2V14L-15 6Z" fill="#fff" stroke="#000" stroke-width="2" stroke-linejoin="miter"/></g>
<g transform="translate(672 123) scale(-1 1)" transform-origin="0 0"><path d="M-10 -12H4Q13 -12 13 -3Q13 6 4 6H-2" fill="none" stroke="#cfcfcf" stroke-width="7"/><path d="M-10 -12H4Q13 -12 13 -3Q13 6 4 6H-2" fill="none" stroke="#f5f5f5" stroke-width="3"/><path d="M-2 -2V14L-15 6Z" fill="#f5f5f5" stroke="#cfcfcf" stroke-width="2" stroke-linejoin="miter"/></g>
<g transform="translate(729 122)" ><path d="M-3 -14L4 3M9 -12L-4 4" stroke="#000" stroke-width="4.500" stroke-linecap="butt"/><ellipse cx="-8" cy="9" rx="4.500" ry="3.500" fill="none" stroke="#000" stroke-width="2.400" transform="rotate(-35 -8 9)"/><ellipse cx="5" cy="11" rx="3.500" ry="4.500" fill="none" stroke="#000" stroke-width="2.400" transform="rotate(-15 5 11)"/></g>
<g transform="translate(779 123)" ><rect x="-3" y="-13" width="16" height="18" fill="#fff" stroke="#000" stroke-width="2"/><rect x="-14" y="-3" width="16" height="18" fill="#fff" stroke="#000" stroke-width="2"/></g>
<g transform="translate(829 123)" ><rect x="-13" y="-14" width="22" height="28" fill="#f2f2f2" stroke="#cfcfcf" stroke-width="2"/><rect x="-7" y="-15" width="10" height="4" fill="#f2f2f2" stroke="#cfcfcf"/><rect x="-1" y="-1" width="15" height="17" fill="#f2f2f2" stroke="#cfcfcf" stroke-width="2"/></g>
<g transform="translate(879 122)" ><g transform="scale(1.15 1.2)"><path d="M-12 -7L-9 14H9L12 -7Z" fill="#fff" stroke="#000" stroke-width="2" stroke-linejoin="round"/><path d="M-14 -8Q0 -13 14 -8" fill="#fff" stroke="#000" stroke-width="2"/><path d="M0 -11V-15" stroke="#000" stroke-width="2"/><path d="M-4 -2L-3 9M1 -3V6M6 -2L5 9" stroke="#555" stroke-width="1.800"/><path d="M2 -5L10 -6L8 13H3Z" fill="#c8c8c8"/></g></g>
<g transform="translate(1095 122)" ><circle cx="-3" cy="-3" r="9" fill="#fff" stroke="#000" stroke-width="2"/><path d="M-8 -3H2M-3 -8V2" stroke="#000" stroke-width="1.800"/><path d="M4 4L14 14" stroke="#000" stroke-width="5"/><path d="M5 5L13 13" stroke="#fff" stroke-width="2"/></g>
<g transform="translate(1146 122)" ><circle cx="-3" cy="-3" r="9" fill="#fff" stroke="#000" stroke-width="2"/><path d="M-8 -3H2" stroke="#000" stroke-width="1.800"/><path d="M4 4L14 14" stroke="#000" stroke-width="5"/><path d="M5 5L13 13" stroke="#fff" stroke-width="2"/></g>
<g transform="translate(1196 123)" ><rect x="-16" y="-16" width="32" height="32" fill="#fff" stroke="#000" stroke-width="2"/><path d="M-12 -10H12M-12 -2H12M-12 6H12M-12 12H12M2 -10V-2M-5 -2V6M4 6V12" stroke="#c8c8c8" stroke-width="2" fill="none"/></g>
<g transform="translate(1246 123)" ><path d="M-12 -12H12M-12 -4H12M-12 6H12M-12 13H12M2 -12V-4M-5 6V13" stroke="#cfcfcf" stroke-width="2"/><path d="M-15 -16V16M15 -16V16" stroke="#000" stroke-width="2.400"/><path d="M-11 0H11M-7 -4L-11 0L-7 4M7 -4L11 0L7 4" stroke="#000" stroke-width="1.800" fill="none"/></g>
<g transform="translate(1300 125)" ><path d="M-4 -1L-10 17H10L4 -1" fill="#fff" stroke="#000" stroke-width="2" stroke-linejoin="round"/><circle cx="0" cy="-7" r="9" fill="#fff" stroke="#000" stroke-width="2"/><path d="M9 -15L12 -20M13 -10L18 -11M12 -13L17 -18" stroke="#000" stroke-width="1.500"/></g>
<g transform="translate(1351 122)" ><path d="M-17 4L0 12L17 4V13L0 22L-17 13Z" fill="#909090" stroke="#2a2a2a" stroke-width="1.500" stroke-linejoin="round"/><path d="M0 12V22" stroke="#2a2a2a" stroke-width="1.200"/><path d="M-17 4L0 12L17 4L0 -3Z" fill="#b8b8b8"/><path d="M-18 0Q-21 -14 -9 -18Q0 -22 10 -18Q21 -13 18 1L13 8H-13Z" fill="#6a6a6a"/><path d="M-16 -12L-20 -18L-12 -16ZM14 -14L19 -19L17 -10Z" fill="#8a8a8a"/><path d="M-12 -3Q-11 -11 0 -11Q11 -11 12 -3V5Q6 10 0 10Q-6 10 -12 5Z" fill="#e2e2e2"/><path d="M-12 -4Q-6 -14 2 -8Q8 -13 12 -4L12 -8Q6 -16 -2 -13Q-10 -14 -12 -6Z" fill="#505050"/><rect x="-8.500" y="-4" width="5.500" height="5.500" fill="#1a1a1a"/><rect x="3" y="-4" width="5.500" height="5.500" fill="#1a1a1a"/><rect x="-7.500" y="-3" width="2" height="2" fill="#fff"/><rect x="4" y="-3" width="2" height="2" fill="#fff"/><path d="M-13 5Q-9 11 -4 6M4 6Q9 11 13 5" stroke="#fff" stroke-width="2.500" fill="none"/><path d="M-2 5H2" stroke="#333" stroke-width="1.200"/></g>
<g transform="translate(416 174)" ><path d="M0 -12L11 0H5V11H-5V0H-11Z" transform="translate(2.5 2.5) rotate(0) scale(0.92)" fill="#cdcdcd" stroke="#cdcdcd" stroke-width="2"/><path d="M0 -12L11 0H5V11H-5V0H-11Z" transform="rotate(0) scale(0.92)" fill="#fff" stroke="#000" stroke-width="2" stroke-linejoin="miter"/></g>
<g transform="translate(466 174)" ><path d="M0 -12L11 0H5V11H-5V0H-11Z" transform="translate(2.5 2.5) rotate(180) scale(0.92)" fill="#cdcdcd" stroke="#cdcdcd" stroke-width="2"/><path d="M0 -12L11 0H5V11H-5V0H-11Z" transform="rotate(180) scale(0.92)" fill="#fff" stroke="#000" stroke-width="2" stroke-linejoin="miter"/></g>
<g transform="translate(516 174)" ><path d="M0 -12L11 0H5V11H-5V0H-11Z" transform="translate(2.5 2.5) rotate(270) scale(0.92)" fill="#cdcdcd" stroke="#cdcdcd" stroke-width="2"/><path d="M0 -12L11 0H5V11H-5V0H-11Z" transform="rotate(270) scale(0.92)" fill="#fff" stroke="#000" stroke-width="2" stroke-linejoin="miter"/></g>
<g transform="translate(566 174)" ><path d="M0 -12L11 0H5V11H-5V0H-11Z" transform="translate(2.5 2.5) rotate(90) scale(0.92)" fill="#cdcdcd" stroke="#cdcdcd" stroke-width="2"/><path d="M0 -12L11 0H5V11H-5V0H-11Z" transform="rotate(90) scale(0.92)" fill="#fff" stroke="#000" stroke-width="2" stroke-linejoin="miter"/></g>
<g transform="translate(621 175)" ><rect x="-16" y="-17" width="33" height="33" fill="#fff" stroke="#c4c4c4" stroke-width="1.500"/><rect x="-15" y="-4" width="20" height="20" fill="#fff" stroke="#000" stroke-width="2"/><path d="M-9 6H-1M-5 2V10" stroke="#000" stroke-width="1.800"/><path d="M5 -4L13 -12" stroke="#000" stroke-width="4"/><path d="M5 -4L13 -12" stroke="#fff" stroke-width="1.500"/><path d="M8 -16H16V-8" fill="none" stroke="#000" stroke-width="2.200"/></g>
<g transform="translate(672 175)" ><rect x="-16" y="-16" width="32" height="32" fill="#fff" stroke="#000" stroke-width="2" stroke-width="2.400"/><path d="M-14 -3H14M4 -14V14" stroke="#c4c4c4" stroke-width="1.500"/><rect x="3" y="-13" width="11" height="11" fill="#fff" stroke="#000" stroke-width="2"/><path d="M6 -5L12 -11M8 -11H12V-7" stroke="#000" stroke-width="1.500" fill="none"/><path d="M-11 6H-2" stroke="#000" stroke-width="2"/></g>
<g transform="translate(722 175)" ><rect x="-16" y="-16" width="32" height="32" fill="#f3f3f3" stroke="#d0d0d0" stroke-width="1.500"/><path d="M0 -11V11M-11 0H11M-3 -8L0 -11L3 -8M-3 8L0 11L3 8M-8 -3L-11 0L-8 3M8 -3L11 0L8 3" fill="none" stroke="#d0d0d0" stroke-width="1.500"/></g>
<g transform="translate(771 176)" ><path d="M-9 10V-11H5Q10 -11 10 -6V-3Q10 1 5 1H-3L7 10" fill="none" stroke="#000" stroke-width="5" stroke-linejoin="miter"/></g>
<g transform="translate(827 175)" ><path d="M-7 12A14.500 14.500 0 1 1 9 11.500" fill="none" stroke="#000" stroke-width="7.500"/><path d="M-7 12A14.500 14.500 0 1 1 9 11.500" fill="none" stroke="#fff" stroke-width="3.600"/><path d="M-12 4L1 6L-4 17Z" fill="#fff" stroke="#000" stroke-width="2" stroke-width="1.800"/></g>
<g transform="translate(878 175) scale(-1 1)" ><path d="M-7 12A14.500 14.500 0 1 1 9 11.500" fill="none" stroke="#000" stroke-width="7.500"/><path d="M-7 12A14.500 14.500 0 1 1 9 11.500" fill="none" stroke="#fff" stroke-width="3.600"/><path d="M-12 4L1 6L-4 17Z" fill="#fff" stroke="#000" stroke-width="2" stroke-width="1.800"/></g>
<g transform="translate(928 175)" ><path d="M-16 -13H16L0 -2Z" fill="#fff" stroke="#000" stroke-width="1.800"/><path d="M-16 13H16L0 2Z" fill="#c4c4c4" stroke="#000" stroke-width="1.800"/><path d="M-17 -1H17M-17 2H17" stroke="#9a9a9a" stroke-width="1"/><path d="M0 -8V8M-3 -5L0 -8L3 -5M-3 5L0 8L3 5" stroke="#000" stroke-width="2" fill="none"/></g>
<g transform="translate(978 175)" ><path d="M-13 -16V16L-2 0Z" fill="#fff" stroke="#000" stroke-width="1.800"/><path d="M13 -16V16L2 0Z" fill="#c4c4c4" stroke="#000" stroke-width="1.800"/><path d="M-1 -17V17M2 -17V17" stroke="#9a9a9a" stroke-width="1"/><path d="M-8 0H8M-5 -3L-8 0L-5 3M5 -3L8 0L5 3" stroke="#000" stroke-width="2" fill="none"/></g>
<g transform="translate(1033 175)" ><path d="M-13 -14V9M-16 -10L-13 -14L-10 -10M-16 5L-13 9L-10 5M-9 14H14M-5 11L-9 14L-5 17M10 11L14 14L10 17" stroke="#000" stroke-width="4" fill="none"/><path d="M-13 -14V9M-16 -10L-13 -14L-10 -10M-16 5L-13 9L-10 5M-9 14H14M-5 11L-9 14L-5 17M10 11L14 14L10 17" stroke="#fff" stroke-width="1.500" fill="none"/><g transform="translate(4 -3) scale(.95)"><path d="M-9 10V-11H5Q10 -11 10 -6V-3Q10 1 5 1H-3L7 10" fill="none" stroke="#000" stroke-width="5" stroke-linejoin="miter"/></g></g>
<g transform="translate(1084 175)" ><path d="M-13 -14V9M-16 -10L-13 -14L-10 -10M-16 5L-13 9L-10 5M-9 14H14M-5 11L-9 14L-5 17M10 11L14 14L10 17" stroke="#000" stroke-width="4" fill="none"/><path d="M-13 -14V9M-16 -10L-13 -14L-10 -10M-16 5L-13 9L-10 5M-9 14H14M-5 11L-9 14L-5 17M10 11L14 14L10 17" stroke="#fff" stroke-width="1.500" fill="none"/><rect x="-5" y="-7" width="18" height="16" fill="#fff" stroke="#000" stroke-width="2"/><path d="M-1 -7V-11Q-1 -16 4 -16Q9 -16 9 -11V-7" fill="none" stroke="#000" stroke-width="2"/><circle cx="4" cy="-1" r="2" fill="#000"/><rect x="3.200" y="-1" width="1.600" height="6" fill="#000"/></g>
<g transform="translate(416 227)" ><rect x="-16" y="-16.500" width="32" height="32" fill="#f8f8f8" stroke="#000" stroke-width="2" stroke-width="2.200"/><path d="M0 -12L11 0H5V11H-5V0H-11Z" transform="translate(2.5 2.5) rotate(0) scale(0.92)" fill="#9a9a9a" stroke="#9a9a9a" stroke-width="2"/><path d="M0 -12L11 0H5V11H-5V0H-11Z" transform="rotate(0) scale(0.92)" fill="#fff" stroke="#000" stroke-width="2" stroke-linejoin="miter"/></g>
<g transform="translate(466 227)" ><rect x="-16" y="-16.500" width="32" height="32" fill="#f8f8f8" stroke="#000" stroke-width="2" stroke-width="2.200"/><path d="M0 -12L11 0H5V11H-5V0H-11Z" transform="translate(2.5 2.5) rotate(180) scale(0.92)" fill="#9a9a9a" stroke="#9a9a9a" stroke-width="2"/><path d="M0 -12L11 0H5V11H-5V0H-11Z" transform="rotate(180) scale(0.92)" fill="#fff" stroke="#000" stroke-width="2" stroke-linejoin="miter"/></g>
<g transform="translate(516 227)" ><rect x="-16" y="-16.500" width="32" height="32" fill="#f8f8f8" stroke="#000" stroke-width="2" stroke-width="2.200"/><path d="M0 -12L11 0H5V11H-5V0H-11Z" transform="translate(2.5 2.5) rotate(270) scale(0.92)" fill="#9a9a9a" stroke="#9a9a9a" stroke-width="2"/><path d="M0 -12L11 0H5V11H-5V0H-11Z" transform="rotate(270) scale(0.92)" fill="#fff" stroke="#000" stroke-width="2" stroke-linejoin="miter"/></g>
<g transform="translate(566 227)" ><rect x="-16" y="-16.500" width="32" height="32" fill="#f8f8f8" stroke="#000" stroke-width="2" stroke-width="2.200"/><path d="M0 -12L11 0H5V11H-5V0H-11Z" transform="translate(2.5 2.5) rotate(90) scale(0.92)" fill="#9a9a9a" stroke="#9a9a9a" stroke-width="2"/><path d="M0 -12L11 0H5V11H-5V0H-11Z" transform="rotate(90) scale(0.92)" fill="#fff" stroke="#000" stroke-width="2" stroke-linejoin="miter"/></g>
<g transform="translate(622 227)" ><path d="M0 -12.0L8.0 6.0H-8.0Z" fill="#000"/><rect x="-1.500" y="5.0" width="3" height="10.0" fill="#000"/><path d="M-15 -15L-9 -9M-9 -13.5V-9H-13.5" stroke="#000" stroke-width="2" fill="none"/><path d="M15 -15L9 -9M9 -13.5V-9H13.5" stroke="#000" stroke-width="2" fill="none"/><path d="M-15 15L-9 9M-9 13.5V9H-13.5" stroke="#000" stroke-width="2" fill="none"/><path d="M15 15L9 9M9 13.5V9H13.5" stroke="#000" stroke-width="2" fill="none"/></g>
<g transform="translate(672 227)" ><path d="M0 -7.4399999999999995L4.96 3.7199999999999998H-4.96Z" fill="#000"/><rect x="-1.500" y="2.7199999999999998" width="3" height="8.48" fill="#000"/><path d="M-9 -9L-15 -15M-15 -10.5V-15H-10.5" stroke="#000" stroke-width="2" fill="none"/><path d="M9 -9L15 -15M15 -10.5V-15H10.5" stroke="#000" stroke-width="2" fill="none"/><path d="M-9 9L-15 15M-15 10.5V15H-10.5" stroke="#000" stroke-width="2" fill="none"/><path d="M9 9L15 15M15 10.5V15H10.5" stroke="#000" stroke-width="2" fill="none"/></g>
<g transform="translate(731 227)" ><g transform="translate(4 0)"><g fill="#7d7d7d"><rect x="-6" y="-16" width="12" height="11" rx="4"/><rect x="-4" y="-5" width="8" height="11"/><path d="M-4 -4L-10 4L-8 5L-3 -1ZM4 -4L10 4L8 5L3 -1Z"/><path d="M-4 5L-6 15H-2L0 8L2 15H6L4 5Z"/><rect x="-8" y="14" width="7" height="2.500"/><rect x="1" y="14" width="7" height="2.500"/></g><rect x="-3.500" y="-11.500" width="2.200" height="3" fill="#fff"/><rect x="1.300" y="-11.500" width="2.200" height="3" fill="#fff"/><path d="M-7 0L12 6" stroke="#000" stroke-width="1.500"/></g><path d="M-10 14Q-18 0 -12 -12" fill="none" stroke="#000" stroke-width="1.800"/><path d="M-16 -11L-11 -16L-9 -9Z" fill="#000"/></g>
<g transform="translate(781 227)" ><g transform="translate(4 0)"><g fill="#7d7d7d"><rect x="-6" y="-16" width="12" height="11" rx="4"/><rect x="-4" y="-5" width="8" height="11"/><path d="M-4 -4L-10 4L-8 5L-3 -1ZM4 -4L10 4L8 5L3 -1Z"/><path d="M-4 5L-6 15H-2L0 8L2 15H6L4 5Z"/><rect x="-8" y="14" width="7" height="2.500"/><rect x="1" y="14" width="7" height="2.500"/></g><rect x="-3.500" y="-11.500" width="2.200" height="3" fill="#fff"/><rect x="1.300" y="-11.500" width="2.200" height="3" fill="#fff"/><path d="M-7 0L12 6" stroke="#000" stroke-width="1.500"/></g><path d="M-10 -14Q-18 0 -12 12" fill="none" stroke="#000" stroke-width="1.800"/><path d="M-16 10L-10 16L-9 8Z" fill="#000"/></g>
<g transform="translate(829 227)" ><g fill="#7d7d7d"><rect x="-6" y="-16" width="12" height="11" rx="4"/><rect x="-4" y="-5" width="8" height="11"/><path d="M-4 -4L-10 4L-8 5L-3 -1ZM4 -4L10 4L8 5L3 -1Z"/><path d="M-4 5L-6 15H-2L0 8L2 15H6L4 5Z"/><rect x="-8" y="14" width="7" height="2.500"/><rect x="1" y="14" width="7" height="2.500"/></g><rect x="-3.500" y="-11.500" width="2.200" height="3" fill="#fff"/><rect x="1.300" y="-11.500" width="2.200" height="3" fill="#fff"/><path d="M-15 -4Q-16 10 0 10Q16 10 16 2" fill="none" stroke="#000" stroke-width="1.800"/><path d="M-19 -3L-12 -8L-11 -1Z" fill="#000"/></g>
<g transform="translate(879 227)" ><g fill="#7d7d7d"><rect x="-6" y="-16" width="12" height="11" rx="4"/><rect x="-4" y="-5" width="8" height="11"/><path d="M-4 -4L-10 4L-8 5L-3 -1ZM4 -4L10 4L8 5L3 -1Z"/><path d="M-4 5L-6 15H-2L0 8L2 15H6L4 5Z"/><rect x="-8" y="14" width="7" height="2.500"/><rect x="1" y="14" width="7" height="2.500"/></g><rect x="-3.500" y="-11.500" width="2.200" height="3" fill="#fff"/><rect x="1.300" y="-11.500" width="2.200" height="3" fill="#fff"/><path d="M15 -4Q16 10 0 10Q-16 10 -16 2" fill="none" stroke="#000" stroke-width="1.800"/><path d="M19 -3L12 -8L11 -1Z" fill="#000"/></g>
<g transform="translate(929 229)" ><g fill="#7d7d7d"><rect x="-6" y="-16" width="12" height="11" rx="4"/><rect x="-4" y="-5" width="8" height="11"/><path d="M-4 -4L-10 4L-8 5L-3 -1ZM4 -4L10 4L8 5L3 -1Z"/><path d="M-4 5L-6 15H-2L0 8L2 15H6L4 5Z"/><rect x="-8" y="14" width="7" height="2.500"/><rect x="1" y="14" width="7" height="2.500"/></g><rect x="-3.500" y="-11.500" width="2.200" height="3" fill="#fff"/><rect x="1.300" y="-11.500" width="2.200" height="3" fill="#fff"/><path d="M-13 -2Q-12 -18 0 -18Q12 -18 14 -8" fill="none" stroke="#000" stroke-width="1.800"/><path d="M-18 -4L-9 -4L-13 3Z" fill="#000"/></g>
<g transform="translate(979 229)" ><g fill="#7d7d7d"><rect x="-6" y="-16" width="12" height="11" rx="4"/><rect x="-4" y="-5" width="8" height="11"/><path d="M-4 -4L-10 4L-8 5L-3 -1ZM4 -4L10 4L8 5L3 -1Z"/><path d="M-4 5L-6 15H-2L0 8L2 15H6L4 5Z"/><rect x="-8" y="14" width="7" height="2.500"/><rect x="1" y="14" width="7" height="2.500"/></g><rect x="-3.500" y="-11.500" width="2.200" height="3" fill="#fff"/><rect x="1.300" y="-11.500" width="2.200" height="3" fill="#fff"/><path d="M13 -2Q12 -18 0 -18Q-12 -18 -14 -8" fill="none" stroke="#000" stroke-width="1.800"/><path d="M18 -4L9 -4L13 3Z" fill="#000"/></g>
<g transform="translate(1029 228)" ><path d="M-9 10V-11H5Q10 -11 10 -6V-3Q10 1 5 1H-3L7 10" fill="none" stroke="#000" stroke-width="5" stroke-linejoin="miter"/></g>
<g transform="translate(1084 227)" ><path d="M-17 -10L-8 0L-17 10Z M-7 -10L2 0L-7 10Z M4 -10L15 0L4 10Z" fill="#fff" stroke="#000" stroke-width="2" stroke-linejoin="miter"/></g>
<g transform="translate(1154 227)" ><rect x="-14" y="-11" width="26" height="25" fill="#fff" stroke="#000" stroke-width="2"/><path d="M-10 -5H8M-10 2H8M-10 8H8M1 -5V2M-4 2V8M3 8V12" stroke="#a8a8a8" stroke-width="2"/><path d="M11 -14L11 -19M14 -11L19 -11M13 -13L17 -17" stroke="#000" stroke-width="1.500"/></g>
<g transform="translate(1205 228)" ><rect x="-13" y="-13" width="26" height="26" fill="#f0f0f0" stroke="#c8c8c8" stroke-width="2"/><path d="M-9 -6H9M-9 1H9M-9 7H9" stroke="#dcdcdc" stroke-width="2"/><path d="M-15 -15L15 15M15 -15L-15 15" stroke="#c8c8c8" stroke-width="3"/></g>
<g fill="#c6c6c6"><rect x="1393" y="217" width="3" height="20"/><path d="M1409 217V237L1396 227Z"/><path d="M1458 217V237L1444 227Z"/><path d="M1494 217V237L1508 227Z"/><path d="M1544 217V237L1557 227Z"/><rect x="1557" y="217" width="3" height="20"/></g>
</g>
<path d="M440.500 105V140M594.500 157V193M800.500 157V193M1006.500 157V193M594.500 209V245M700.500 209V245M1056.500 209V245" stroke="#c0c0c0"/>
<text x="342" y="184.5" font-size="23" font-weight="700" fill="#3c72b8" textLength="44" lengthAdjust="spacingAndGlyphs" style="font-family:'Liberation Sans',sans-serif">2D :</text>
<text x="341" y="236.5" font-size="23" font-weight="700" fill="#e01818" textLength="45" lengthAdjust="spacingAndGlyphs" style="font-family:'Liberation Sans',sans-serif">3D :</text>
<text x="1304" y="233" font-size="25" text-anchor="middle" textLength="56" lengthAdjust="spacingAndGlyphs">1 / 1</text>
<text x="919" y="133" font-size="30" textLength="61" lengthAdjust="spacingAndGlyphs">78%</text><path d="M1041 119L1048 126L1055 119" fill="none" stroke="#333" stroke-width="1.600"/>
</svg>

<!-- 50_canvas.html -->
<div id="canvas" style="left:335px;top:256px;width:1215px;height:1094px;background:#808080"></div>
<div id="page" style="left:335px;top:369px;width:1215px;height:868px;background:#fff"></div>
<div id="vscroll" style="left:1550px;top:256px;width:34px;height:1094px;background:#f0f0f0"></div>

<!-- 55_canvas_art.html -->
<svg class="ov" id="art">
 <defs>
  <clipPath id="cv"><rect x="335" y="256" width="1215" height="1094"/></clipPath>
  <clipPath id="pg"><rect x="335" y="369" width="1215" height="868"/></clipPath>
  <linearGradient id="hairg" gradientUnits="userSpaceOnUse" x1="0" y1="788" x2="0" y2="1122"><stop offset="0" stop-color="#5683d3"/><stop offset="0.2" stop-color="#4a78cd"/><stop offset="0.5" stop-color="#406bc6"/><stop offset="0.75" stop-color="#345bb4"/><stop offset="1" stop-color="#274a98"/></linearGradient>
  <linearGradient id="irisg" x1="0" y1="0" x2="0" y2="1"><stop offset="0" stop-color="#0a2a78"/><stop offset="0.45" stop-color="#1c5cc4"/><stop offset="0.8" stop-color="#4a9ae8"/><stop offset="1" stop-color="#8accf8"/></linearGradient>
  <linearGradient id="jk" x1="0" y1="0" x2="0" y2="1"><stop offset="0" stop-color="#ff86a4"/><stop offset="1" stop-color="#fb7a9a"/></linearGradient>
 </defs>
 <!-- page guides -->
 <g fill="none" shape-rendering="crispEdges">
  <rect x="348.500" y="382.500" width="1187" height="841" stroke="#118a11" stroke-width="1" stroke-dasharray="1 1.500"/>
  <rect x="419.500" y="442.500" width="1044" height="721" stroke="#1414f0" stroke-width="1"/>
  <rect x="433.500" y="456.500" width="1016" height="693" stroke="#f01414" stroke-width="1" stroke-dasharray="3 2"/>
 </g>
 <g clip-path="url(#pg)" id="chara">
  <!-- back hair silhouette incl. hanging strands -->
  <path d="M625 788 C600 788 570 796 549 812 C535 824 526 834 518 850 C508 872 503 890 502 905 C501 925 503 945 507 962 C510 980 514 996 517.400 1007.700 L531.700 1043.500 L547.200 1085.200 L562.100 1120.400 L560.300 1091 L554.400 1055.400 L556 1020 L600 1040 L650 1040 L694 1020 L695.600 1055.400 L689.700 1091 L687.900 1120.400 L702.800 1085.200 L718.300 1043.500 L732.600 1007.700 C736 996 740 980 743 962 C745 945 747 925 747 905 C746 888 742 870 736 856 C728 838 716 824 701 812 C690 803 672 795 660 792 C648 789 636 788 625 788 Z" fill="url(#hairg)" stroke="#101828" stroke-width="1.6" stroke-linejoin="round"/>
  <!-- dark underside -->
  <path d="M546 1005 L554 1040 L560 1058 L567 1079 L574 1071 L585.400 1054 L594 1056 L594 1040 L570 1025 L556 1010 Z" fill="#223e5c" stroke="#101828" stroke-width="1"/>
  <path d="M704 1005 L696 1040 L690 1058 L683 1079 L676 1071 L664 1054 L653 1056 L653 1040 L680 1025 L694 1010 Z" fill="#223e5c" stroke="#101828" stroke-width="1"/>
  <!-- neck -->
  <path d="M594 1040 L594 1058 L617 1106 L653 1058 L653 1040 Z" fill="#f5c8b6"/>
  <!-- jacket -->
  <path d="M459.500 1238 L465 1186 L472 1141 L476 1121 Q480 1108 491 1102 L528 1089 L557 1086 L576 1076 L617 1130 L672 1073 L693 1086 L723 1090 L761 1104 Q772 1110 775 1121 L780 1141 L791 1186 L797 1238 Z" fill="url(#jk)" stroke="#2a1820" stroke-width="2" stroke-linejoin="round"/>
  <g fill="none" stroke="#d85c7c" stroke-width="3" opacity=".55" stroke-linecap="round">
   <path d="M470 1180 Q495 1200 522 1196"/><path d="M472 1215 Q495 1222 520 1218"/>
   <path d="M786 1180 Q760 1200 722 1180"/><path d="M790 1212 Q760 1222 722 1210"/>
   <path d="M560 1150 Q575 1190 598 1225"/><path d="M690 1150 Q670 1195 645 1225"/>
  </g>
  <!-- shirt -->
  <path d="M585 1055 L574 1077 L571 1100 L576 1147 L602 1215 L607 1238 L623 1238 L635 1215 L660 1152 L668 1110 L671 1077 L664 1055 L653 1058 L617 1106 L594 1058 Z" fill="#fbfbfb"/>
  <path d="M617 1108 L606 1118 Q617 1126 628 1118 Z" fill="#d4d4d8" stroke="#3a3a3a" stroke-width="1"/>
  <path d="M612 1128 L612 1236 M623 1128 L623 1236" stroke="#e0e0e4" stroke-width="1.5"/>
  <path d="M578 1148 L584 1152 L590 1145 L602 1215 M658 1150 L651 1154 L645 1146 L635 1215" fill="none" stroke="#d0d0d4" stroke-width="2"/>
  <path d="M585 1055 L594 1060 L617 1106 L590 1145 M664 1055 L653 1060 L617 1106 L645 1146" fill="none" stroke="#2c2c2c" stroke-width="2.4" stroke-linejoin="round"/>
  <path d="M585 1055 Q588 1064 594 1060 M664 1055 Q660 1064 653 1060" fill="#ddd" stroke="#555" stroke-width="1"/>
  <!-- lapels -->
  <path d="M549 1090 L524 1117 L549 1129 L532 1142 L586 1238" fill="none" stroke="#2a1820" stroke-width="1.5" stroke-linejoin="round"/>
  <path d="M701 1088 L716 1117 L689 1131 L705 1143 L643 1238" fill="none" stroke="#2a1820" stroke-width="1.5" stroke-linejoin="round"/>
  <path d="M574 1077 L571 1100 L576 1147 L602 1215 L607 1238 M671 1077 L668 1110 L660 1152 L635 1215 L623 1238" fill="none" stroke="#b04a66" stroke-width="1.2"/>
  <path d="M491 1106 Q505 1150 518 1195 L522 1238 M754 1108 Q735 1140 721 1176 L719 1238" fill="none" stroke="#2a1820" stroke-width="1.4"/>
  <!-- front hanging strands over jacket -->
  <path d="M560.500 1054 L571 1071 L564 1080 Z M689.500 1054 L679 1071 L686 1080 Z" fill="#fbfbfb" stroke="#444" stroke-width=".8"/>
  <path d="M510.500 982 L517.400 1007.700 L531.700 1043.500 L547.200 1085.200 L562.100 1120.400 L560.300 1091 L554.400 1055.400 L547.200 1010 L541 982 Z" fill="#3058b0" stroke="#101828" stroke-width="1.4" stroke-linejoin="round"/>
  <path d="M531 1020 L543 1060 L556 1100 L551 1062 L543 1022 Z" fill="#4574d8"/>
  <path d="M538 1004 L548 1052 L558 1098" fill="none" stroke="#101828" stroke-width="1.100"/>
  <path d="M739.500 982 L732.600 1007.700 L718.300 1043.500 L702.800 1085.200 L687.900 1120.400 L689.700 1091 L695.600 1055.400 L702.800 1010 L709 982 Z" fill="#3058b0" stroke="#101828" stroke-width="1.4" stroke-linejoin="round"/>
  <path d="M719 1020 L707 1060 L694 1100 L699 1062 L707 1022 Z" fill="#4574d8"/>
  <path d="M712 1004 L702 1052 L692 1098" fill="none" stroke="#101828" stroke-width="1.100"/>
  <!-- face -->
  <path d="M541 900 C538 930 538 960 542 985 C546 1005 554 1020 566 1030 C585 1045 605 1053 623 1053 C642 1053 664 1044 682 1029 C694 1019 702 1004 705 990 C710 968 714 940 713 925 C708 890 695 865 680 850 L600 850 Z" fill="#ffebe0"/>
  <path d="M556 1020 C585 1045 605 1053 623 1053 C642 1053 664 1044 693 1020" fill="none" stroke="#3a2018" stroke-width="1.2"/>
  <!-- shadows under bangs -->
  <path d="M617 939.200 L638.500 921 L652.500 901.500 L667.500 880 L678.800 852 L686 862 L673 885 L660 906 L648 924 L630 939 L617 946 Z" fill="#f2b9a2"/>
  <path d="M678.800 852 C694 868 708 895 713.500 928 L708 940 C704 905 694 880 678 860 Z" fill="#f2b9a2"/>
  <!-- blush -->
  <ellipse cx="571.500" cy="1001.500" rx="10" ry="6" fill="#fbd0d0"/>
  <ellipse cx="678" cy="1001.500" rx="10" ry="6" fill="#fbd0d0"/>
  <!-- eyes -->
  <g>
   <g>
    <path d="M549 956 Q556 938 578 932 Q598 934 602 946 Q601 962 592 976 L564 977 Q553 968 549 956Z" fill="#fff"/>
    <ellipse cx="577" cy="957" rx="16.500" ry="19.500" fill="url(#irisg)" stroke="#0a1a40" stroke-width="1.600"/>
    <ellipse cx="577.500" cy="955" rx="9" ry="11.500" fill="#0c2a72"/>
    <ellipse cx="577" cy="968" rx="10" ry="5" fill="#9ad4fa" opacity=".55"/>
    <ellipse cx="565.5" cy="950.500" rx="4.800" ry="3.600" fill="#fff"/><circle cx="584" cy="966.500" r="2.100" fill="#e8f8ff"/>
    <path d="M546 955 Q553 938 566 932 Q578 927.500 590 931 Q599 936 602.500 946 L599 945 Q594 939 586 937 Q574 934.500 564 940 Q555 946 551 957 Z" fill="#0a0a12"/>
    <path d="M547 955 L543.500 956 M549 949 L545 946 M598 938 L602 934.500 M594 934 L597 930" stroke="#0a0a12" stroke-width="1.500"/>
    <path d="M553 966 Q557 974 565 977" fill="none" stroke="#1a1a2a" stroke-width="1.300"/>
   </g>
   <g transform="translate(1250 0) scale(-1 1)">
    <path d="M549 956 Q556 938 578 932 Q598 934 602 946 Q601 962 592 976 L564 977 Q553 968 549 956Z" fill="#fff"/>
    <ellipse cx="577" cy="957" rx="16.500" ry="19.500" fill="url(#irisg)" stroke="#0a1a40" stroke-width="1.600"/>
    <ellipse cx="577.500" cy="955" rx="9" ry="11.500" fill="#0c2a72"/>
    <ellipse cx="577" cy="968" rx="10" ry="5" fill="#9ad4fa" opacity=".55"/>
    <ellipse cx="588" cy="950.500" rx="4.800" ry="3.600" fill="#fff"/><circle cx="569.5" cy="966.500" r="2.100" fill="#e8f8ff"/>
    <path d="M546 955 Q553 938 566 932 Q578 927.500 590 931 Q599 936 602.500 946 L599 945 Q594 939 586 937 Q574 934.500 564 940 Q555 946 551 957 Z" fill="#0a0a12"/>
    <path d="M547 955 L543.500 956 M549 949 L545 946 M598 938 L602 934.500 M594 934 L597 930" stroke="#0a0a12" stroke-width="1.500"/>
    <path d="M553 966 Q557 974 565 977" fill="none" stroke="#1a1a2a" stroke-width="1.300"/>
   </g>
   <path d="M589 924.700 L597.500 925.800 M649.200 926.800 L675 925.200" stroke="#6a5a50" stroke-width="1.100" stroke-dasharray="4 1.500"/>
  </g>
  <path d="M624.500 984 L624.500 988" stroke="#4a3028" stroke-width="1.2"/>
  <path d="M614.500 1015 Q620 1014 624 1015 Q630 1016 635 1015" fill="none" stroke="#3a2018" stroke-width="1.2"/>
  <rect x="538.500" y="988" width="3" height="12" fill="#6a3a28"/><rect x="709" y="988" width="3" height="12" fill="#6a3a28"/>
  <!-- side hair over face edges -->
  <path d="M502 905 C503 945 508 975 517.400 1007.700 L531.700 1043.500 L548 1012 C544 1000 542 990 541 985 C536 960 538 930 541 905 C546 880 556 860 575 840 L540 830 Z" fill="url(#hairg)"/>
  <path d="M747 905 C746 945 740 975 732.600 1007.700 L718.300 1043.500 L702 1012 C704 1002 705 995 706 990 C712 960 714 940 713.500 928 C706 885 694 866 680 852 L715 835 Z" fill="url(#hairg)"/>
  <!-- bangs -->
  <path d="M541 959 L553 944 L556 948 L567.400 932.800 L595.400 915.500 L617 901.500 L637.400 886.500 L627.700 915.500 L617 939.200 L638.500 921 L652.500 901.500 L667.500 880 L678.800 852 L705 835 L700 815 L660 796 L625 792 L575 802 L538 840 L512 900 L516 948 Z" fill="url(#hairg)"/>
  <path d="M600.800 880 L584 902 L567.400 925.200" fill="none" stroke="#f2b9a2" stroke-width="2.600"/>
  <!-- left sliver -->
  <path d="M553.600 894 C548 910 543 930 541.500 949 L546 944 C548 925 552 908 557 896 Z" fill="#f2b9a2"/>
  <!-- hair strand lines -->
  <g fill="none" stroke="#101828" stroke-width="1.5" stroke-linecap="round">
   <path d="M541 959 C543 920 556 880 580 850 C600 826 625 808 648 800"/>
   <path d="M556 948 C570 905 600 860 650 815"/>
   <path d="M567.400 932.800 L595.400 915.500 L617 901.500 L637.400 886.500" stroke-width="2"/>
   <path d="M578 922 C600 880 640 840 680 812"/>
   <path d="M617 939.200 L627.700 915.500 L637.400 886.500 C644 866 650 840 653 812" stroke-width="2.400"/>
   <path d="M617 939.200 L638.500 921 L652.500 901.500 L667.500 880 L678.800 852 C681 838 680 825 678 812"/>
   <path d="M678.800 852 C700 870 712 895 713.500 928 C714 955 712 975 706 990"/>
   <path d="M541 953 C535 935 534 915 538 895 C544 865 556 840 575 820"/>
   <path d="M524 1022 C514 985 512 945 516 910 C520 875 532 845 552 822"/>
   <path d="M532 1005 C522 960 524 915 532 880"/>
   <path d="M724 1022 C734 985 738 945 734 910 C730 875 718 845 702 826"/>
   <path d="M716 1005 C726 960 726 915 720 880"/>
   <path d="M600 810 C585 820 570 835 560 852"/>
  </g>
  <path d="M551 915 Q575 903 604 901.500 M646 901.500 Q680 900 701 917" fill="none" stroke="#101828" stroke-width="1.2"/>
  <!-- hair highlight -->
  <path d="M549 829 L565 824 L585 826 L600 823 M612 826 L640 823 L655 826 M700 832 L712 836 L722 833" fill="none" stroke="#b4d0f0" stroke-width="2.200" opacity=".8" stroke-linecap="round"/>
 </g>
 <!-- selection guides -->
 <g fill="none" stroke="#f01414" clip-path="url(#cv)">
  <path d="M335 658.500H1140.500V1350" stroke-width="1.800" stroke-dasharray="2 2"/>
  <circle cx="618.500" cy="639" r="9" stroke-width="2" fill="#fff"/><path d="M618.500 648V658" stroke-width="2"/>
  <rect x="1139.500" y="641.500" width="17" height="17" stroke-width="2" fill="#fff"/><rect x="1144" y="646" width="8" height="8" stroke-width="2"/>
  <circle cx="1160" cy="1181" r="9" stroke-width="2" fill="#fff"/><path d="M1141 1181H1151" stroke-width="2"/>
 </g>
 <g fill="none" stroke="#1414f0" stroke-width="1.200">
  <rect x="555.500" y="1117.500" width="18" height="18" fill="rgba(255,255,255,.15)"/>
  <rect x="663.500" y="1117.500" width="18" height="18" fill="rgba(255,255,255,.15)"/>
  <rect x="575.500" y="1137.500" width="86" height="86"/>
 </g>
 <g fill="none" stroke="#f01414" stroke-width="1.800">
  <rect x="603" y="1165" width="30" height="30"/>
  <circle cx="618.300" cy="1149.600" r="6.500"/><circle cx="587.500" cy="1180.400" r="6.500"/><circle cx="648.500" cy="1180.400" r="6.500"/><circle cx="618.300" cy="1210.600" r="6.500"/>
 </g>
 <rect x="994" y="800" width="2" height="1" fill="#333"/>
 <path d="M1561.500 277L1567.500 270.500L1573.500 277" fill="none" stroke="#b8b8b8" stroke-width="3"/>
 <path d="M1561.500 1329L1567.500 1335.500L1573.500 1329" fill="none" stroke="#b8b8b8" stroke-width="3"/>
</svg>

<!-- 60_right.html -->
<div style="left:1584px;top:97px;width:1px;height:1253px;background:#a8a8a8"></div>
<div id="rightpanel" style="left:1589px;top:97px;width:331px;height:1253px;background:#eeeeee"></div>
<div class="hdr" style="left:1589px;top:97px;width:331px;height:40px"></div>
<div style="left:1589px;top:703px;width:331px;height:2px;background:#9a9a9a"></div>
<div class="hdr" style="left:1589px;top:705px;width:331px;height:40px"></div>
<div id="nameinput" style="left:1595px;top:140px;width:318px;height:44px;background:#fff;border:1px solid #7a7a7a"></div>
<div style="left:1715px;top:188px;width:92px;height:44px;background:#e6e6e6;border:1px solid #adadad"></div>
<div style="left:1715px;top:188px;width:58px;height:44px;background:#fff;border:1px solid #7a7a7a;border-right:none"></div>
<div style="left:1715px;top:234px;width:92px;height:44px;background:#e6e6e6;border:1px solid #adadad"></div>
<div style="left:1715px;top:234px;width:58px;height:44px;background:#fff;border:1px solid #7a7a7a;border-right:none"></div>
<div style="left:1715px;top:280px;width:92px;height:44px;background:#e6e6e6;border:1px solid #adadad"></div>
<div style="left:1715px;top:280px;width:58px;height:44px;background:#fff;border:1px solid #7a7a7a;border-right:none"></div>
<div id="swatch" style="left:1849px;top:192px;width:36px;height:36px;background:#fff;border:2px solid #8c8c8c"></div>
<div id="eyebtn" style="left:1594px;top:334px;width:46px;height:46px;background:#fcc400;border:1px solid #b89a48;border-radius:7px"></div>
<div style="left:1694px;top:334px;width:1px;height:49px;background:#c4c4c4"></div>
<div id="tab3d" style="left:1594px;top:394px;width:173px;height:29px;background:#dcf068;border-radius:7px 7px 0 0"></div>
<div style="left:1594px;top:422px;width:318px;height:4px;background:#dcf068"></div>
<div id="tab3dc" style="left:1594px;top:522px;width:248px;height:29px;background:#dcf068;border-radius:7px 7px 0 0"></div>
<div style="left:1594px;top:550px;width:318px;height:4px;background:#dcf068"></div>
<div class="b3" style="left:1594px;top:434px;width:70px;height:70px;border:1px solid #dedede;border-radius:7px;background:#efefef"></div>
<div class="b3" style="left:1668px;top:434px;width:70px;height:70px;border:1px solid #dedede;border-radius:7px;background:#efefef"></div>
<div class="b3" style="left:1816px;top:434px;width:70px;height:70px;border:1px solid #dedede;border-radius:7px;background:#efefef"></div>
<div class="b3" style="left:1594px;top:562px;width:70px;height:70px;border:1px solid #dedede;border-radius:7px;background:#efefef"></div>
<div class="b3" style="left:1668px;top:562px;width:70px;height:70px;border:1px solid #dedede;border-radius:7px;background:#efefef"></div>
<div class="b3" style="left:1742px;top:562px;width:70px;height:70px;border:1px solid #dedede;border-radius:7px;background:#efefef"></div>
<div class="b3" style="left:1816px;top:562px;width:70px;height:70px;border:1px solid #dedede;border-radius:7px;background:#efefef"></div>
<div id="layerlist" style="left:1590px;top:803px;width:294px;height:547px;background:linear-gradient(#ececec,#e2e2e2 50%,#c8c8c8);border-left:1px solid #fafafa;border-right:1px solid #fafafa"></div>
<div id="layerrow" style="left:1591px;top:803px;width:292px;height:43px;background:linear-gradient(#ffe8b0 0%,#fed77a 40%,#fdc53c 75%,#fcba1c 100%)"></div>
<div id="rscroll" style="left:1885px;top:803px;width:34px;height:547px;background:#f0f0f0"></div>
<svg class="ov">
 <text x="1595" y="125" font-size="26" font-weight="700" fill="#fff" textLength="220" lengthAdjust="spacingAndGlyphs">レイヤープロパティ</text>
 <text x="1595" y="733" font-size="26" font-weight="700" fill="#fff" textLength="173" lengthAdjust="spacingAndGlyphs">レイヤーリスト</text>
 <text x="1600" y="171" font-size="26" textLength="47" lengthAdjust="spacingAndGlyphs">OL1</text>
 <g font-size="25">
  <text x="1595" y="219" textLength="105" lengthAdjust="spacingAndGlyphs">フチドリ 幅</text>
  <text x="1595" y="265" textLength="72" lengthAdjust="spacingAndGlyphs">透明度</text>
  <text x="1595" y="311" textLength="62" lengthAdjust="spacingAndGlyphs">ぼかし</text>
  <text x="1816" y="219" textLength="23" lengthAdjust="spacingAndGlyphs">色</text>
 </g>
 <g font-size="27">
  <text x="1719" y="220">0</text><text x="1719" y="266">0</text><text x="1719" y="312">0</text>
 </g>
 <g fill="#222">
  <path d="M1784 203h10l-5 -6zM1784 217h10l-5 6z"/>
  <path d="M1784 249h10l-5 -6zM1784 263h10l-5 6z"/>
  <path d="M1784 295h10l-5 -6zM1784 309h10l-5 6z"/>
 </g>
 <g stroke="#b4b4b4" stroke-width="1"><path d="M1774 210.500h32M1774 256.500h32M1774 302.500h32"/></g>
 <text x="1613" y="418" font-size="22" font-weight="700" fill="#5c9018" textLength="85" lengthAdjust="spacingAndGlyphs">３Ｄ設定</text>
 <text x="1613" y="546" font-size="22" font-weight="700" fill="#5c9018" textLength="219" lengthAdjust="spacingAndGlyphs">３Ｄキャラクター設定</text>
 <text x="1664" y="834" font-size="26" textLength="50" lengthAdjust="spacingAndGlyphs">OL1</text>
 <path d="M1895.500 824.500L1901.500 818.500L1907.500 824.500" fill="none" stroke="#b8b8b8" stroke-width="3"/>
 <path d="M1895.500 1329L1901.500 1335.500L1907.500 1329" fill="none" stroke="#b8b8b8" stroke-width="3"/>
</svg>

<!-- 65_right_icons.html -->
<svg class="ov" id="righticons">
<defs><filter id="rsh" x="-30%" y="-30%" width="170%" height="170%"><feDropShadow dx="1.600" dy="1.800" stdDeviation="0.700" flood-color="#000" flood-opacity=".28"/></filter><filter id="rsh2" x="-30%" y="-30%" width="170%" height="170%"><feDropShadow dx="1.500" dy="1.500" stdDeviation="0.700" flood-color="#000" flood-opacity=".12"/></filter><linearGradient id="rainbow" x1="0" y1="0" x2="1" y2="0"><stop offset="0" stop-color="#ff6a6a"/><stop offset=".12" stop-color="#ff8a78"/><stop offset=".3" stop-color="#fff070"/><stop offset=".45" stop-color="#b0f070"/><stop offset=".6" stop-color="#60e8c8"/><stop offset=".75" stop-color="#60a8ff"/><stop offset=".88" stop-color="#c080ff"/><stop offset="1" stop-color="#ff70e0"/></linearGradient><radialGradient id="sphW" cx=".35" cy=".35" r=".8"><stop offset="0" stop-color="#fff"/><stop offset="1" stop-color="#d8d8d8"/></radialGradient><radialGradient id="sphG" cx=".35" cy=".35" r=".8"><stop offset="0" stop-color="#d0d0d0"/><stop offset="1" stop-color="#808080"/></radialGradient><linearGradient id="pill" x1="0" y1="0" x2="1" y2="0"><stop offset="0" stop-color="#fff"/><stop offset="1" stop-color="#c0c0c0"/></linearGradient><linearGradient id="pawnG" x1="0" y1="0" x2="0" y2="1"><stop offset="0" stop-color="#c8c8c8"/><stop offset="1" stop-color="#fff"/></linearGradient></defs>
<g transform="translate(1617 357)" ><path d="M-18 2Q-8 -12 4 -10Q14 -8 19 0Q10 10 0 11Q-10 10 -18 2Z" fill="#fff"/><circle cx="-1" cy="1" r="9.500" fill="#8c8c8c" stroke="#333" stroke-width="1"/><circle cx="-1" cy="1" r="5" fill="#222"/><circle cx="-5" cy="-3" r="3" fill="#fff"/><path d="M-19 3Q-8 -13 5 -11Q15 -9 20 -1" fill="none" stroke="#000" stroke-width="3.500" stroke-linecap="round"/><path d="M-16 5Q-6 12 2 12Q10 11 17 3" fill="none" stroke="#555" stroke-width="1.200"/><path d="M8 -15Q16 -14 21 -9" fill="none" stroke="#000" stroke-width="1.800"/></g>
<g transform="translate(1666 357)" ><g filter="url(#rsh)"><path d="M-6 -17H12Q17 -17 17 -12V4H-6Z" fill="#fff" stroke="#e0e0e0"/><rect x="-15" y="-11" width="29" height="27" fill="#fff" stroke="#000" stroke-width="2"/></g><path d="M-7 -10V-2Q-7 4 -1 4L-4 9L3 4H14" fill="none" stroke="#000" stroke-width="1.500"/></g>
<g transform="translate(1721 357)" ><g filter="url(#rsh)"><rect x="-16" y="-16" width="32" height="32" fill="#ececec"/><rect x="-16" y="-16" width="8" height="8" fill="#b4b4b4"/><rect x="-16" y="0" width="8" height="8" fill="#b4b4b4"/><rect x="-8" y="-8" width="8" height="8" fill="#b4b4b4"/><rect x="-8" y="8" width="8" height="8" fill="#b4b4b4"/><rect x="0" y="-16" width="8" height="8" fill="#b4b4b4"/><rect x="0" y="0" width="8" height="8" fill="#b4b4b4"/><rect x="8" y="-8" width="8" height="8" fill="#b4b4b4"/><rect x="8" y="8" width="8" height="8" fill="#b4b4b4"/><rect x="-16" y="-16" width="32" height="32" fill="none" stroke="#000" stroke-width="2"/></g></g>
<g transform="translate(1771 357)" ><g filter="url(#rsh)"><rect x="-16" y="-16" width="32" height="32" fill="url(#rainbow)" stroke="#000" stroke-width="2"/></g></g>
<g transform="translate(1866 358)" filter="url(#rsh)"><path d="M-9 10V-11H5Q10 -11 10 -6V-3Q10 1 5 1H-3L7 10" fill="none" stroke="#000" stroke-width="5" stroke-linejoin="miter"/></g>
<g transform="translate(1628 468)" ><g filter="url(#rsh)"><path d="M-14 -10L-8 -6V-10H14V6H4V16H-4V6H-8V2L-14 6Z" fill="#fff" stroke="#000" stroke-width="2" stroke-linejoin="miter"/><rect x="-4" y="-6" width="14" height="8" fill="#d0d0d0" stroke="#777"/><path d="M0 -2H6" stroke="#555" stroke-width="1.500"/></g></g>
<g transform="translate(1703 468)" ><g filter="url(#rsh)"><path d="M-14 -14L-4 -15L-9 -9L-1 -5L-5 -2L-11 -6L-14 -2Z" fill="#fff" stroke="#000" stroke-width="1.800"/><path d="M14 16L4 17L9 11L1 7L5 4L11 8L14 4Z" fill="#fff" stroke="#000" stroke-width="1.800"/><circle cx="7" cy="-7" r="9.500" fill="url(#sphW)" stroke="#000" stroke-width="1.800"/><circle cx="-7" cy="7" r="9.500" fill="url(#sphG)" stroke="#000" stroke-width="1.800"/></g></g>
<g transform="translate(1851 468)" ><g filter="url(#rsh)" style="font-family:'Liberation Sans',sans-serif" font-weight="700" stroke="#000" stroke-width="3.500" paint-order="stroke" fill="#fff"><text x="-17" y="2" font-size="24">3</text><text x="-3" y="14" font-size="19">D</text></g></g>
<g transform="translate(1629 597)" ><g filter="url(#rsh)"><path d="M-17 0Q-19 -6 -16 -6Q-14 -20 0 -19Q14 -20 16 -6Q19 -6 17 0Q18 6 14 6Q10 18 0 18Q-10 18 -14 6Q-18 6 -17 0Z" fill="#fff" stroke="#000" stroke-width="1.800"/></g><path d="M-10 -4Q-6 -7 -3 -4M3 -4Q6 -7 10 -4" fill="none" stroke="#000" stroke-width="1.500"/><circle cx="-6" cy="-1" r="1.800"/><circle cx="6" cy="-1" r="1.800"/><path d="M-6 8Q0 13 6 8" fill="none" stroke="#000" stroke-width="1.500"/><path d="M-12 3Q-10 10 -6 13M12 3Q10 10 6 13" fill="none" stroke="#aaa" stroke-width="1.500"/></g>
<g transform="translate(1703 597)" ><g filter="url(#rsh)" fill="none" stroke-linecap="round" stroke-linejoin="round"><g stroke="#000" stroke-width="6.500"><circle cx="-1" cy="-12" r="3.500"/><path d="M-4 -5L-4 6M-4 -4L-14 -1L-13 5M-2 -5L8 -8L10 -16M-4 6L-12 10L-12 16M-4 6L4 10L9 16"/></g><g stroke="#fff" stroke-width="3"><circle cx="-1" cy="-12" r="3.500" fill="#fff"/><path d="M-4 -5L-4 6M-4 -4L-14 -1L-13 5M-2 -5L8 -8L10 -16M-4 6L-12 10L-12 16M-4 6L4 10L9 16"/></g></g></g>
<g transform="translate(1777 597)" ><g filter="url(#rsh)"><rect x="-17" y="-10" width="9" height="20" rx="4.500" fill="url(#pill)" stroke="#000" stroke-width="2"/><rect x="-5" y="-10" width="9" height="20" rx="4.500" fill="url(#pill)" stroke="#000" stroke-width="2"/><path d="M7 -2Q8 -8 13 -6Q18 -4 17 3" fill="none" stroke="#000" stroke-width="5"/><path d="M7 -2Q8 -8 13 -6Q18 -4 17 3" fill="none" stroke="#fff" stroke-width="1.800"/></g></g>
<g transform="translate(1851 597)" ><g filter="url(#rsh)"><path d="M1 -4L-3 12H17L9 -4" fill="#8a8a8a"/><circle cx="6" cy="-10" r="7" fill="#8a8a8a"/><path d="M-9 0L-15 14H1L-3 0" fill="url(#pawnG)" stroke="#444" stroke-width="1"/><circle cx="-6" cy="-6" r="7" fill="url(#pawnG)" stroke="#666" stroke-width="1"/><path d="M-4 2L4 8L0 14H8" fill="none" stroke="#fff" stroke-width="1.500"/></g></g>
<g transform="translate(1616 771)" filter="url(#rsh2)"><path d="M-5 -12H5V-2H11L0 9L-11 -2H-5Z" fill="#c2c2c2"/><rect x="-11" y="12" width="22" height="2.500" fill="#c2c2c2"/></g>
<g transform="translate(1666 771)" filter="url(#rsh2)"><path d="M-4 -10H4V-1H9L0 9L-9 -1H-4Z" fill="#f4f4f4" stroke="#c2c2c2" stroke-width="1.800"/></g>
<g transform="translate(1716 771)" filter="url(#rsh2)"><path d="M-4 10H4V1H9L0 -9L-9 1H-4Z" fill="#f4f4f4" stroke="#c2c2c2" stroke-width="1.800"/></g>
<g transform="translate(1766 771)" filter="url(#rsh2)"><path d="M-5 12H5V2H11L0 -9L-11 2H-5Z" fill="#c2c2c2"/><rect x="-11" y="-14" width="22" height="2.500" fill="#c2c2c2"/></g>
<g transform="translate(1866 772)" filter="url(#rsh)"><g transform="scale(1.12 1.22)"><path d="M-12 -7L-9 14H9L12 -7Z" fill="#fff" stroke="#000" stroke-width="2" stroke-linejoin="round"/><path d="M2 -5L10 -6L8 13H3Z" fill="#c8c8c8"/><path d="M-14 -8Q0 -13 14 -8" fill="#fff" stroke="#000" stroke-width="2"/><path d="M0 -11V-15" stroke="#000" stroke-width="2"/><path d="M-4 -2L-3 9M1 -3V6M6 -2L5 9" stroke="#555" stroke-width="1.800"/></g></g>
<g transform="translate(1638 826)" ><g stroke="#000" stroke-width="1.500" fill="#fff" stroke-linejoin="round"><path d="M-4 -5L-3 4L-7 14L-3 15L1 6L4 14L8 13L4 3L4 -5Z"/><path d="M-4 -4L-11 3L-9 6L-3 1ZM4 -4L10 3L8 6L3 1Z"/><rect x="-9" y="14" width="7" height="3"/><rect x="2" y="14" width="7" height="3"/><circle cx="0" cy="-11" r="6.500"/></g><rect x="-3" y="-13" width="1.500" height="2.500"/><rect x="1.500" y="-13" width="1.500" height="2.500"/><path d="M-2 -8H2" stroke="#000" stroke-width="1"/></g>
</svg>

<!-- 70_status.html -->
<div id="status" style="left:32px;top:1349px;width:1888px;height:45px;background:#f0f0f0;border-top:1px solid #b0b0b0"></div>
<div style="left:1154px;top:1353px;width:1px;height:40px;background:#d4d4d4"></div>
<div style="left:1365px;top:1353px;width:1px;height:40px;background:#d4d4d4"></div>
<div style="left:1560px;top:1353px;width:1px;height:40px;background:#d4d4d4"></div>
<div style="left:1742px;top:1353px;width:147px;height:41px;background:#e8e8e8;border:1px solid #c0c0c0"></div>
<svg class="ov">
 <g font-size="22.5">
 <text x="35" y="1383" textLength="146" lengthAdjust="spacingAndGlyphs">OL1 - &lt;歩く1&gt;</text>
 <text x="1160" y="1383" textLength="99" lengthAdjust="spacingAndGlyphs">-431, 259</text>
 <text x="1370" y="1383" textLength="127" lengthAdjust="spacingAndGlyphs">1331 x 1331</text>
 <text x="1564" y="1383" textLength="74" lengthAdjust="spacingAndGlyphs">0.00 度</text>
 </g>
 <g fill="#b8b8b8"><rect x="1910" y="1376" width="3" height="3"/><rect x="1905" y="1381" width="3" height="3"/><rect x="1910" y="1381" width="3" height="3"/><rect x="1900" y="1386" width="3" height="3"/><rect x="1905" y="1386" width="3" height="3"/><rect x="1910" y="1386" width="3" height="3"/></g>
</svg>

</body>
</html>
